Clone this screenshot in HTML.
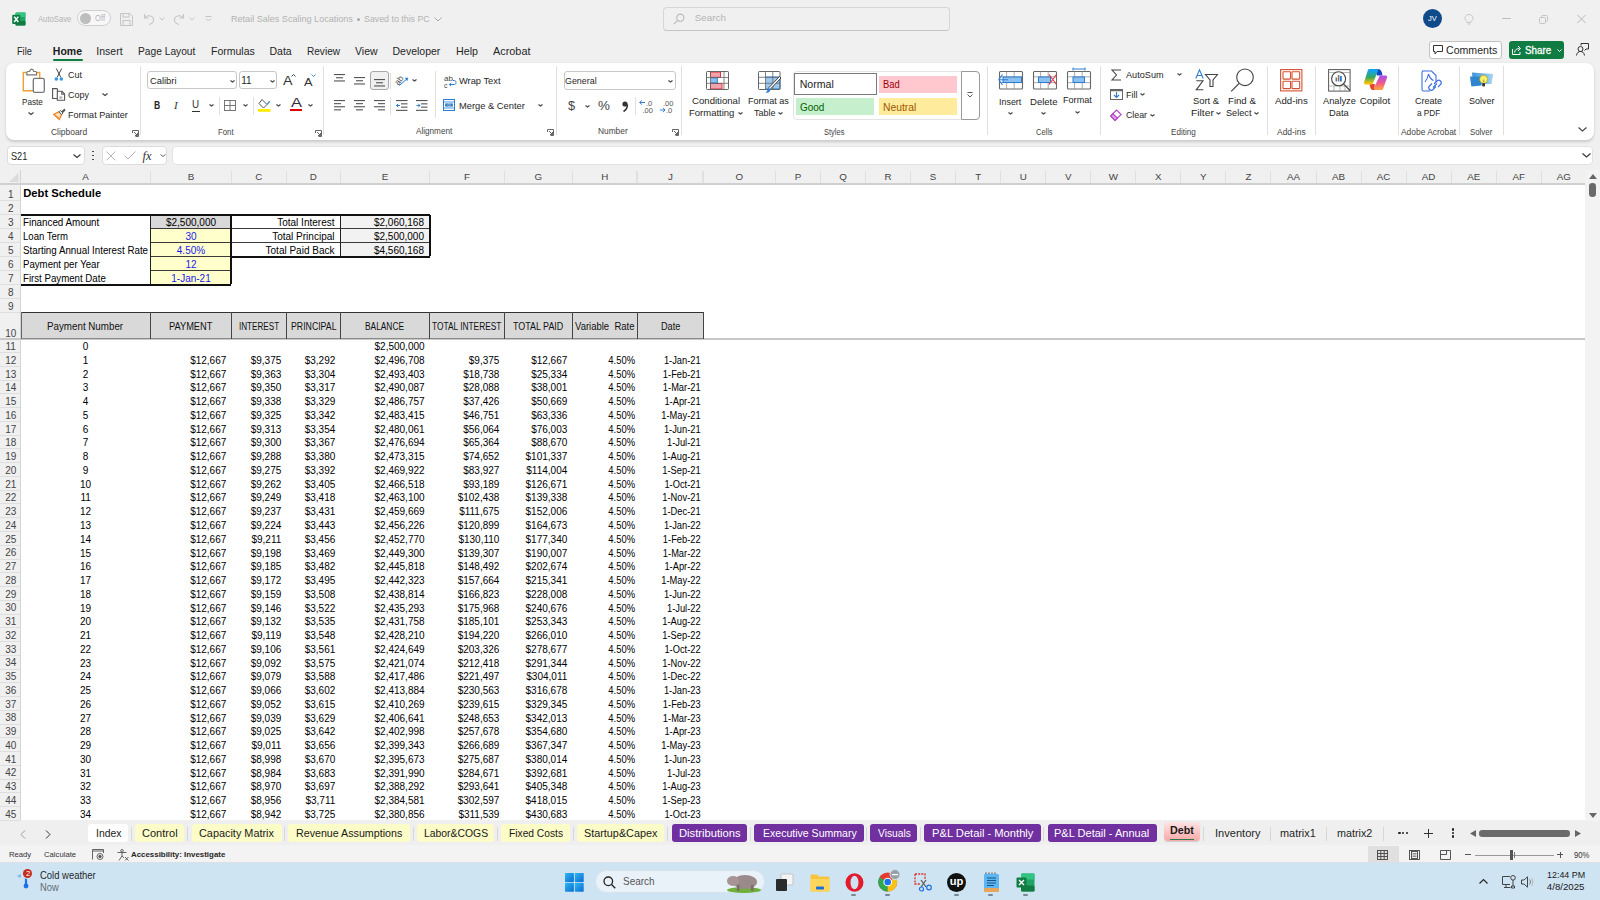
<!DOCTYPE html><html><head><meta charset="utf-8"><style>
*{box-sizing:border-box;margin:0;padding:0}
html,body{width:1600px;height:900px;overflow:hidden;background:#f0f0f0;font-family:"Liberation Sans",sans-serif;color:#222}
.a{position:absolute;white-space:nowrap}
.t{position:absolute;white-space:nowrap;line-height:1}

svg{position:absolute;overflow:visible}
</style></head><body>
<div class="a" style="left:0;top:169.5px;width:1585px;height:650.8px;background:#f0f0f0"></div>
<div class="a" style="left:21px;top:185.0px;width:1564px;height:635.3px;background:#fff"></div>
<div class="a" style="left:150.20px;top:170.5px;width:1px;height:13px;background:#e0e0e0"></div>
<div class="t" style="left:20.50px;width:130.20px;top:172.2px;text-align:center;font-size:9.8px;color:#444">A</div>
<div class="a" style="left:230.80px;top:170.5px;width:1px;height:13px;background:#e0e0e0"></div>
<div class="t" style="left:150.70px;width:80.60px;top:172.2px;text-align:center;font-size:9.8px;color:#444">B</div>
<div class="a" style="left:285.80px;top:170.5px;width:1px;height:13px;background:#e0e0e0"></div>
<div class="t" style="left:231.30px;width:55.00px;top:172.2px;text-align:center;font-size:9.8px;color:#444">C</div>
<div class="a" style="left:339.80px;top:170.5px;width:1px;height:13px;background:#e0e0e0"></div>
<div class="t" style="left:286.30px;width:54.00px;top:172.2px;text-align:center;font-size:9.8px;color:#444">D</div>
<div class="a" style="left:429.10px;top:170.5px;width:1px;height:13px;background:#e0e0e0"></div>
<div class="t" style="left:340.30px;width:89.30px;top:172.2px;text-align:center;font-size:9.8px;color:#444">E</div>
<div class="a" style="left:503.90px;top:170.5px;width:1px;height:13px;background:#e0e0e0"></div>
<div class="t" style="left:429.60px;width:74.80px;top:172.2px;text-align:center;font-size:9.8px;color:#444">F</div>
<div class="a" style="left:571.80px;top:170.5px;width:1px;height:13px;background:#e0e0e0"></div>
<div class="t" style="left:504.40px;width:67.90px;top:172.2px;text-align:center;font-size:9.8px;color:#444">G</div>
<div class="a" style="left:636.80px;top:170.5px;width:1px;height:13px;background:#e0e0e0"></div>
<div class="t" style="left:572.30px;width:65.00px;top:172.2px;text-align:center;font-size:9.8px;color:#444">H</div>
<div class="a" style="left:702.90px;top:170.5px;width:1px;height:13px;background:#e0e0e0"></div>
<div class="t" style="left:637.30px;width:66.10px;top:172.2px;text-align:center;font-size:9.8px;color:#444">J</div>
<div class="a" style="left:774.90px;top:170.5px;width:1px;height:13px;background:#e0e0e0"></div>
<div class="t" style="left:703.40px;width:72.00px;top:172.2px;text-align:center;font-size:9.8px;color:#444">O</div>
<div class="a" style="left:819.95px;top:170.5px;width:1px;height:13px;background:#e0e0e0"></div>
<div class="t" style="left:775.40px;width:45.05px;top:172.2px;text-align:center;font-size:9.8px;color:#444">P</div>
<div class="a" style="left:865.00px;top:170.5px;width:1px;height:13px;background:#e0e0e0"></div>
<div class="t" style="left:820.45px;width:45.05px;top:172.2px;text-align:center;font-size:9.8px;color:#444">Q</div>
<div class="a" style="left:910.05px;top:170.5px;width:1px;height:13px;background:#e0e0e0"></div>
<div class="t" style="left:865.50px;width:45.05px;top:172.2px;text-align:center;font-size:9.8px;color:#444">R</div>
<div class="a" style="left:955.10px;top:170.5px;width:1px;height:13px;background:#e0e0e0"></div>
<div class="t" style="left:910.55px;width:45.05px;top:172.2px;text-align:center;font-size:9.8px;color:#444">S</div>
<div class="a" style="left:1000.15px;top:170.5px;width:1px;height:13px;background:#e0e0e0"></div>
<div class="t" style="left:955.60px;width:45.05px;top:172.2px;text-align:center;font-size:9.8px;color:#444">T</div>
<div class="a" style="left:1045.20px;top:170.5px;width:1px;height:13px;background:#e0e0e0"></div>
<div class="t" style="left:1000.65px;width:45.05px;top:172.2px;text-align:center;font-size:9.8px;color:#444">U</div>
<div class="a" style="left:1090.25px;top:170.5px;width:1px;height:13px;background:#e0e0e0"></div>
<div class="t" style="left:1045.70px;width:45.05px;top:172.2px;text-align:center;font-size:9.8px;color:#444">V</div>
<div class="a" style="left:1135.30px;top:170.5px;width:1px;height:13px;background:#e0e0e0"></div>
<div class="t" style="left:1090.75px;width:45.05px;top:172.2px;text-align:center;font-size:9.8px;color:#444">W</div>
<div class="a" style="left:1180.35px;top:170.5px;width:1px;height:13px;background:#e0e0e0"></div>
<div class="t" style="left:1135.80px;width:45.05px;top:172.2px;text-align:center;font-size:9.8px;color:#444">X</div>
<div class="a" style="left:1225.40px;top:170.5px;width:1px;height:13px;background:#e0e0e0"></div>
<div class="t" style="left:1180.85px;width:45.05px;top:172.2px;text-align:center;font-size:9.8px;color:#444">Y</div>
<div class="a" style="left:1270.45px;top:170.5px;width:1px;height:13px;background:#e0e0e0"></div>
<div class="t" style="left:1225.90px;width:45.05px;top:172.2px;text-align:center;font-size:9.8px;color:#444">Z</div>
<div class="a" style="left:1315.50px;top:170.5px;width:1px;height:13px;background:#e0e0e0"></div>
<div class="t" style="left:1270.95px;width:45.05px;top:172.2px;text-align:center;font-size:9.8px;color:#444">AA</div>
<div class="a" style="left:1360.55px;top:170.5px;width:1px;height:13px;background:#e0e0e0"></div>
<div class="t" style="left:1316.00px;width:45.05px;top:172.2px;text-align:center;font-size:9.8px;color:#444">AB</div>
<div class="a" style="left:1405.60px;top:170.5px;width:1px;height:13px;background:#e0e0e0"></div>
<div class="t" style="left:1361.05px;width:45.05px;top:172.2px;text-align:center;font-size:9.8px;color:#444">AC</div>
<div class="a" style="left:1450.65px;top:170.5px;width:1px;height:13px;background:#e0e0e0"></div>
<div class="t" style="left:1406.10px;width:45.05px;top:172.2px;text-align:center;font-size:9.8px;color:#444">AD</div>
<div class="a" style="left:1495.70px;top:170.5px;width:1px;height:13px;background:#e0e0e0"></div>
<div class="t" style="left:1451.15px;width:45.05px;top:172.2px;text-align:center;font-size:9.8px;color:#444">AE</div>
<div class="a" style="left:1540.75px;top:170.5px;width:1px;height:13px;background:#e0e0e0"></div>
<div class="t" style="left:1496.20px;width:45.05px;top:172.2px;text-align:center;font-size:9.8px;color:#444">AF</div>
<div class="a" style="left:1585.80px;top:170.5px;width:1px;height:13px;background:#e0e0e0"></div>
<div class="t" style="left:1541.25px;width:45.05px;top:172.2px;text-align:center;font-size:9.8px;color:#444">AG</div>
<div class="a" style="left:635.80px;top:170.5px;width:1px;height:13px;background:#e0e0e0"></div>
<div class="a" style="left:702.00px;top:170.5px;width:1px;height:13px;background:#e0e0e0"></div>
<div class="a" style="left:0;top:183.3px;width:1585px;height:1.6px;background:#d0d0d0"></div>
<div class="a" style="left:19.8px;top:170px;width:1.2px;height:650.3px;background:#d4d4d4"></div>
<svg style="left:0;top:0" width="1" height="1"><polygon points="9,182 18.5,182 18.5,172.5" fill="#dcdcdc"/></svg>
<div class="a" style="left:0;top:200.10px;width:20px;height:1px;background:#dedede"></div>
<div class="t" style="left:1px;width:19.5px;top:190.00px;text-align:center;font-size:10px;color:#444">1</div>
<div class="a" style="left:0;top:214.20px;width:20px;height:1px;background:#dedede"></div>
<div class="t" style="left:1px;width:19.5px;top:204.10px;text-align:center;font-size:10px;color:#444">2</div>
<div class="a" style="left:0;top:228.20px;width:20px;height:1px;background:#dedede"></div>
<div class="t" style="left:1px;width:19.5px;top:218.10px;text-align:center;font-size:10px;color:#444">3</div>
<div class="a" style="left:0;top:242.10px;width:20px;height:1px;background:#dedede"></div>
<div class="t" style="left:1px;width:19.5px;top:232.00px;text-align:center;font-size:10px;color:#444">4</div>
<div class="a" style="left:0;top:256.00px;width:20px;height:1px;background:#dedede"></div>
<div class="t" style="left:1px;width:19.5px;top:245.90px;text-align:center;font-size:10px;color:#444">5</div>
<div class="a" style="left:0;top:270.00px;width:20px;height:1px;background:#dedede"></div>
<div class="t" style="left:1px;width:19.5px;top:259.90px;text-align:center;font-size:10px;color:#444">6</div>
<div class="a" style="left:0;top:284.00px;width:20px;height:1px;background:#dedede"></div>
<div class="t" style="left:1px;width:19.5px;top:273.90px;text-align:center;font-size:10px;color:#444">7</div>
<div class="a" style="left:0;top:297.90px;width:20px;height:1px;background:#dedede"></div>
<div class="t" style="left:1px;width:19.5px;top:287.80px;text-align:center;font-size:10px;color:#444">8</div>
<div class="a" style="left:0;top:311.90px;width:20px;height:1px;background:#dedede"></div>
<div class="t" style="left:1px;width:19.5px;top:301.80px;text-align:center;font-size:10px;color:#444">9</div>
<div class="a" style="left:0;top:338.45px;width:20px;height:1px;background:#dedede"></div>
<div class="t" style="left:1px;width:19.5px;top:329.15px;text-align:center;font-size:10px;color:#444">10</div>
<div class="a" style="left:0;top:352.20px;width:20px;height:1px;background:#dedede"></div>
<div class="t" style="left:1px;width:19.5px;top:342.10px;text-align:center;font-size:10px;color:#444">11</div>
<div class="a" style="left:0;top:365.96px;width:20px;height:1px;background:#dedede"></div>
<div class="t" style="left:1px;width:19.5px;top:355.86px;text-align:center;font-size:10px;color:#444">12</div>
<div class="a" style="left:0;top:379.71px;width:20px;height:1px;background:#dedede"></div>
<div class="t" style="left:1px;width:19.5px;top:369.61px;text-align:center;font-size:10px;color:#444">13</div>
<div class="a" style="left:0;top:393.46px;width:20px;height:1px;background:#dedede"></div>
<div class="t" style="left:1px;width:19.5px;top:383.36px;text-align:center;font-size:10px;color:#444">14</div>
<div class="a" style="left:0;top:407.21px;width:20px;height:1px;background:#dedede"></div>
<div class="t" style="left:1px;width:19.5px;top:397.11px;text-align:center;font-size:10px;color:#444">15</div>
<div class="a" style="left:0;top:420.97px;width:20px;height:1px;background:#dedede"></div>
<div class="t" style="left:1px;width:19.5px;top:410.87px;text-align:center;font-size:10px;color:#444">16</div>
<div class="a" style="left:0;top:434.72px;width:20px;height:1px;background:#dedede"></div>
<div class="t" style="left:1px;width:19.5px;top:424.62px;text-align:center;font-size:10px;color:#444">17</div>
<div class="a" style="left:0;top:448.47px;width:20px;height:1px;background:#dedede"></div>
<div class="t" style="left:1px;width:19.5px;top:438.37px;text-align:center;font-size:10px;color:#444">18</div>
<div class="a" style="left:0;top:462.23px;width:20px;height:1px;background:#dedede"></div>
<div class="t" style="left:1px;width:19.5px;top:452.13px;text-align:center;font-size:10px;color:#444">19</div>
<div class="a" style="left:0;top:475.98px;width:20px;height:1px;background:#dedede"></div>
<div class="t" style="left:1px;width:19.5px;top:465.88px;text-align:center;font-size:10px;color:#444">20</div>
<div class="a" style="left:0;top:489.73px;width:20px;height:1px;background:#dedede"></div>
<div class="t" style="left:1px;width:19.5px;top:479.63px;text-align:center;font-size:10px;color:#444">21</div>
<div class="a" style="left:0;top:503.49px;width:20px;height:1px;background:#dedede"></div>
<div class="t" style="left:1px;width:19.5px;top:493.39px;text-align:center;font-size:10px;color:#444">22</div>
<div class="a" style="left:0;top:517.24px;width:20px;height:1px;background:#dedede"></div>
<div class="t" style="left:1px;width:19.5px;top:507.14px;text-align:center;font-size:10px;color:#444">23</div>
<div class="a" style="left:0;top:530.99px;width:20px;height:1px;background:#dedede"></div>
<div class="t" style="left:1px;width:19.5px;top:520.89px;text-align:center;font-size:10px;color:#444">24</div>
<div class="a" style="left:0;top:544.74px;width:20px;height:1px;background:#dedede"></div>
<div class="t" style="left:1px;width:19.5px;top:534.64px;text-align:center;font-size:10px;color:#444">25</div>
<div class="a" style="left:0;top:558.50px;width:20px;height:1px;background:#dedede"></div>
<div class="t" style="left:1px;width:19.5px;top:548.40px;text-align:center;font-size:10px;color:#444">26</div>
<div class="a" style="left:0;top:572.25px;width:20px;height:1px;background:#dedede"></div>
<div class="t" style="left:1px;width:19.5px;top:562.15px;text-align:center;font-size:10px;color:#444">27</div>
<div class="a" style="left:0;top:586.00px;width:20px;height:1px;background:#dedede"></div>
<div class="t" style="left:1px;width:19.5px;top:575.90px;text-align:center;font-size:10px;color:#444">28</div>
<div class="a" style="left:0;top:599.76px;width:20px;height:1px;background:#dedede"></div>
<div class="t" style="left:1px;width:19.5px;top:589.66px;text-align:center;font-size:10px;color:#444">29</div>
<div class="a" style="left:0;top:613.51px;width:20px;height:1px;background:#dedede"></div>
<div class="t" style="left:1px;width:19.5px;top:603.41px;text-align:center;font-size:10px;color:#444">30</div>
<div class="a" style="left:0;top:627.26px;width:20px;height:1px;background:#dedede"></div>
<div class="t" style="left:1px;width:19.5px;top:617.16px;text-align:center;font-size:10px;color:#444">31</div>
<div class="a" style="left:0;top:641.02px;width:20px;height:1px;background:#dedede"></div>
<div class="t" style="left:1px;width:19.5px;top:630.92px;text-align:center;font-size:10px;color:#444">32</div>
<div class="a" style="left:0;top:654.77px;width:20px;height:1px;background:#dedede"></div>
<div class="t" style="left:1px;width:19.5px;top:644.67px;text-align:center;font-size:10px;color:#444">33</div>
<div class="a" style="left:0;top:668.52px;width:20px;height:1px;background:#dedede"></div>
<div class="t" style="left:1px;width:19.5px;top:658.42px;text-align:center;font-size:10px;color:#444">34</div>
<div class="a" style="left:0;top:682.28px;width:20px;height:1px;background:#dedede"></div>
<div class="t" style="left:1px;width:19.5px;top:672.18px;text-align:center;font-size:10px;color:#444">35</div>
<div class="a" style="left:0;top:696.03px;width:20px;height:1px;background:#dedede"></div>
<div class="t" style="left:1px;width:19.5px;top:685.93px;text-align:center;font-size:10px;color:#444">36</div>
<div class="a" style="left:0;top:709.78px;width:20px;height:1px;background:#dedede"></div>
<div class="t" style="left:1px;width:19.5px;top:699.68px;text-align:center;font-size:10px;color:#444">37</div>
<div class="a" style="left:0;top:723.53px;width:20px;height:1px;background:#dedede"></div>
<div class="t" style="left:1px;width:19.5px;top:713.43px;text-align:center;font-size:10px;color:#444">38</div>
<div class="a" style="left:0;top:737.29px;width:20px;height:1px;background:#dedede"></div>
<div class="t" style="left:1px;width:19.5px;top:727.19px;text-align:center;font-size:10px;color:#444">39</div>
<div class="a" style="left:0;top:751.04px;width:20px;height:1px;background:#dedede"></div>
<div class="t" style="left:1px;width:19.5px;top:740.94px;text-align:center;font-size:10px;color:#444">40</div>
<div class="a" style="left:0;top:764.79px;width:20px;height:1px;background:#dedede"></div>
<div class="t" style="left:1px;width:19.5px;top:754.69px;text-align:center;font-size:10px;color:#444">41</div>
<div class="a" style="left:0;top:778.55px;width:20px;height:1px;background:#dedede"></div>
<div class="t" style="left:1px;width:19.5px;top:768.45px;text-align:center;font-size:10px;color:#444">42</div>
<div class="a" style="left:0;top:792.30px;width:20px;height:1px;background:#dedede"></div>
<div class="t" style="left:1px;width:19.5px;top:782.20px;text-align:center;font-size:10px;color:#444">43</div>
<div class="a" style="left:0;top:806.05px;width:20px;height:1px;background:#dedede"></div>
<div class="t" style="left:1px;width:19.5px;top:795.95px;text-align:center;font-size:10px;color:#444">44</div>
<div class="a" style="left:0;top:819.81px;width:20px;height:1px;background:#dedede"></div>
<div class="t" style="left:1px;width:19.5px;top:809.71px;text-align:center;font-size:10px;color:#444">45</div>
<div class="a" style="left:0;top:338.2px;width:1585px;height:1.4px;background:#c8c8c8"></div>
<div class="a" style="left:150.70px;top:214.70px;width:80.60px;height:14.00px;background:#d9d9d9"></div>
<div class="a" style="left:150.70px;top:228.70px;width:80.60px;height:55.80px;background:#ffffcc"></div>
<div class="a" style="left:340.30px;top:214.70px;width:89.30px;height:41.80px;background:#f2f2f2"></div>
<div class="a" style="left:150.70px;top:228.15px;width:80.60px;height:1.1px;background:#3a3a3a"></div>
<div class="a" style="left:150.70px;top:242.05px;width:80.60px;height:1.1px;background:#3a3a3a"></div>
<div class="a" style="left:150.70px;top:255.95px;width:80.60px;height:1.1px;background:#3a3a3a"></div>
<div class="a" style="left:150.70px;top:269.95px;width:80.60px;height:1.1px;background:#3a3a3a"></div>
<div class="a" style="left:231.30px;top:228.15px;width:198.30px;height:1.1px;background:#3a3a3a"></div>
<div class="a" style="left:231.30px;top:242.05px;width:198.30px;height:1.1px;background:#3a3a3a"></div>
<div class="a" style="left:20.50px;top:213.70px;width:210.80px;height:2px;background:#111"></div>
<div class="a" style="left:20.50px;top:283.50px;width:210.80px;height:2px;background:#111"></div>
<div class="a" style="left:230.30px;top:214.70px;width:2px;height:69.80px;background:#111"></div>
<div class="a" style="left:150.05px;top:214.70px;width:1.3px;height:69.80px;background:#222"></div>
<div class="a" style="left:231.30px;top:213.70px;width:198.30px;height:2px;background:#111"></div>
<div class="a" style="left:231.30px;top:255.50px;width:198.30px;height:2px;background:#111"></div>
<div class="a" style="left:230.30px;top:214.70px;width:2px;height:41.80px;background:#111"></div>
<div class="a" style="left:428.60px;top:214.70px;width:2px;height:41.80px;background:#111"></div>
<div class="a" style="left:339.65px;top:214.70px;width:1.3px;height:41.80px;background:#222"></div>
<div class="t" style="top:218.20px;font-size:10px;color:#000;left:150.70px;width:80.60px;text-align:center;">$2,500,000</div>
<div class="t" style="top:232.10px;font-size:10px;color:#1a1aee;left:150.70px;width:80.60px;text-align:center;">30</div>
<div class="t" style="top:246.00px;font-size:10px;color:#1a1aee;left:150.70px;width:80.60px;text-align:center;">4.50%</div>
<div class="t" style="top:260.00px;font-size:10px;color:#1a1aee;left:150.70px;width:80.60px;text-align:center;">12</div>
<div class="t" style="top:274.00px;font-size:10px;color:#1a1aee;left:150.70px;width:80.60px;text-align:center;">1-Jan-21</div>
<div class="t" style="top:218.20px;font-size:10px;color:#000;left:286.30px;width:48.20px;text-align:right;left:231.30px;width:103.20px;">Total Interest</div>
<div class="t" style="top:218.20px;font-size:10px;color:#000;left:340.30px;width:83.70px;text-align:right;">$2,060,168</div>
<div class="t" style="top:232.10px;font-size:10px;color:#000;left:286.30px;width:48.20px;text-align:right;left:231.30px;width:103.20px;">Total Principal</div>
<div class="t" style="top:232.10px;font-size:10px;color:#000;left:340.30px;width:83.70px;text-align:right;">$2,500,000</div>
<div class="t" style="top:246.00px;font-size:10px;color:#000;left:286.30px;width:48.20px;text-align:right;left:231.30px;width:103.20px;">Total Paid Back</div>
<div class="t" style="top:246.00px;font-size:10px;color:#000;left:340.30px;width:83.70px;text-align:right;">$4,560,168</div>
<div class="a" style="left:20.50px;top:312.40px;width:682.90px;height:26.55px;background:#d9d9d9"></div>
<div class="a" style="left:20.50px;top:311.60px;width:682.90px;height:1.6px;background:#333"></div>
<div class="a" style="left:20.50px;top:337.75px;width:682.90px;height:1.2px;background:#8a8a8a"></div>
<div class="a" style="left:150.00px;top:312.40px;width:1.4px;height:26.55px;background:#444"></div>
<div class="a" style="left:230.60px;top:312.40px;width:1.4px;height:26.55px;background:#444"></div>
<div class="a" style="left:285.60px;top:312.40px;width:1.4px;height:26.55px;background:#444"></div>
<div class="a" style="left:339.60px;top:312.40px;width:1.4px;height:26.55px;background:#444"></div>
<div class="a" style="left:428.90px;top:312.40px;width:1.4px;height:26.55px;background:#444"></div>
<div class="a" style="left:503.70px;top:312.40px;width:1.4px;height:26.55px;background:#444"></div>
<div class="a" style="left:571.60px;top:312.40px;width:1.4px;height:26.55px;background:#444"></div>
<div class="a" style="left:636.60px;top:312.40px;width:1.4px;height:26.55px;background:#444"></div>
<div class="a" style="left:702.70px;top:312.40px;width:1.4px;height:26.55px;background:#444"></div>
<div class="a" style="left:20.60px;top:312.40px;width:1px;height:26.55px;background:#666"></div>
<div class="t" style="left:47.20px;top:322.01px;font-size:10px;color:#111;transform-origin:0 0;transform:scaleX(0.978)">Payment Number</div>
<div class="t" style="left:169.40px;top:322.01px;font-size:10px;color:#111;transform-origin:0 0;transform:scaleX(0.926)">PAYMENT</div>
<div class="t" style="left:238.70px;top:322.01px;font-size:10px;color:#111;transform-origin:0 0;transform:scaleX(0.811)">INTEREST</div>
<div class="t" style="left:290.50px;top:322.01px;font-size:10px;color:#111;transform-origin:0 0;transform:scaleX(0.874)">PRINCIPAL</div>
<div class="t" style="left:365.00px;top:322.01px;font-size:10px;color:#111;transform-origin:0 0;transform:scaleX(0.835)">BALANCE</div>
<div class="t" style="left:432.20px;top:322.01px;font-size:10px;color:#111;transform-origin:0 0;transform:scaleX(0.835)">TOTAL INTEREST</div>
<div class="t" style="left:513.20px;top:322.01px;font-size:10px;color:#111;transform-origin:0 0;transform:scaleX(0.893)">TOTAL PAID</div>
<div class="t" style="left:575.30px;top:322.01px;font-size:10px;color:#111;transform-origin:0 0;transform:scaleX(0.950)">Variable&nbsp; Rate</div>
<div class="t" style="left:660.50px;top:322.01px;font-size:10px;color:#111;transform-origin:0 0;transform:scaleX(0.914)">Date</div>
<div class="t" style="top:342.20px;font-size:10px;color:#000;left:20.50px;width:130.20px;text-align:center;">0</div>
<div class="t" style="top:342.20px;font-size:10px;color:#000;left:340.30px;width:84.30px;text-align:right;">$2,500,000</div>
<div class="t" style="top:355.96px;font-size:10px;color:#000;left:20.50px;width:130.20px;text-align:center;">1</div>
<div class="t" style="top:355.96px;font-size:10px;color:#000;left:150.70px;width:75.60px;text-align:right;">$12,667</div>
<div class="t" style="top:355.96px;font-size:10px;color:#000;left:231.30px;width:50.00px;text-align:right;">$9,375</div>
<div class="t" style="top:355.96px;font-size:10px;color:#000;left:286.30px;width:49.00px;text-align:right;">$3,292</div>
<div class="t" style="top:355.96px;font-size:10px;color:#000;left:340.30px;width:84.30px;text-align:right;">$2,496,708</div>
<div class="t" style="top:355.96px;font-size:10px;color:#000;left:429.60px;width:69.80px;text-align:right;">$9,375</div>
<div class="t" style="top:355.96px;font-size:10px;color:#000;left:504.40px;width:62.90px;text-align:right;">$12,667</div>
<div class="t" style="top:355.96px;font-size:10px;color:#000;left:572.30px;width:63.00px;text-align:right;transform-origin:100% 0;transform:scaleX(0.94);">4.50%</div>
<div class="t" style="top:355.96px;font-size:10px;color:#000;left:637.30px;width:63.60px;text-align:right;transform-origin:100% 0;transform:scaleX(0.93);">1-Jan-21</div>
<div class="t" style="top:369.71px;font-size:10px;color:#000;left:20.50px;width:130.20px;text-align:center;">2</div>
<div class="t" style="top:369.71px;font-size:10px;color:#000;left:150.70px;width:75.60px;text-align:right;">$12,667</div>
<div class="t" style="top:369.71px;font-size:10px;color:#000;left:231.30px;width:50.00px;text-align:right;">$9,363</div>
<div class="t" style="top:369.71px;font-size:10px;color:#000;left:286.30px;width:49.00px;text-align:right;">$3,304</div>
<div class="t" style="top:369.71px;font-size:10px;color:#000;left:340.30px;width:84.30px;text-align:right;">$2,493,403</div>
<div class="t" style="top:369.71px;font-size:10px;color:#000;left:429.60px;width:69.80px;text-align:right;">$18,738</div>
<div class="t" style="top:369.71px;font-size:10px;color:#000;left:504.40px;width:62.90px;text-align:right;">$25,334</div>
<div class="t" style="top:369.71px;font-size:10px;color:#000;left:572.30px;width:63.00px;text-align:right;transform-origin:100% 0;transform:scaleX(0.94);">4.50%</div>
<div class="t" style="top:369.71px;font-size:10px;color:#000;left:637.30px;width:63.60px;text-align:right;transform-origin:100% 0;transform:scaleX(0.93);">1-Feb-21</div>
<div class="t" style="top:383.46px;font-size:10px;color:#000;left:20.50px;width:130.20px;text-align:center;">3</div>
<div class="t" style="top:383.46px;font-size:10px;color:#000;left:150.70px;width:75.60px;text-align:right;">$12,667</div>
<div class="t" style="top:383.46px;font-size:10px;color:#000;left:231.30px;width:50.00px;text-align:right;">$9,350</div>
<div class="t" style="top:383.46px;font-size:10px;color:#000;left:286.30px;width:49.00px;text-align:right;">$3,317</div>
<div class="t" style="top:383.46px;font-size:10px;color:#000;left:340.30px;width:84.30px;text-align:right;">$2,490,087</div>
<div class="t" style="top:383.46px;font-size:10px;color:#000;left:429.60px;width:69.80px;text-align:right;">$28,088</div>
<div class="t" style="top:383.46px;font-size:10px;color:#000;left:504.40px;width:62.90px;text-align:right;">$38,001</div>
<div class="t" style="top:383.46px;font-size:10px;color:#000;left:572.30px;width:63.00px;text-align:right;transform-origin:100% 0;transform:scaleX(0.94);">4.50%</div>
<div class="t" style="top:383.46px;font-size:10px;color:#000;left:637.30px;width:63.60px;text-align:right;transform-origin:100% 0;transform:scaleX(0.93);">1-Mar-21</div>
<div class="t" style="top:397.21px;font-size:10px;color:#000;left:20.50px;width:130.20px;text-align:center;">4</div>
<div class="t" style="top:397.21px;font-size:10px;color:#000;left:150.70px;width:75.60px;text-align:right;">$12,667</div>
<div class="t" style="top:397.21px;font-size:10px;color:#000;left:231.30px;width:50.00px;text-align:right;">$9,338</div>
<div class="t" style="top:397.21px;font-size:10px;color:#000;left:286.30px;width:49.00px;text-align:right;">$3,329</div>
<div class="t" style="top:397.21px;font-size:10px;color:#000;left:340.30px;width:84.30px;text-align:right;">$2,486,757</div>
<div class="t" style="top:397.21px;font-size:10px;color:#000;left:429.60px;width:69.80px;text-align:right;">$37,426</div>
<div class="t" style="top:397.21px;font-size:10px;color:#000;left:504.40px;width:62.90px;text-align:right;">$50,669</div>
<div class="t" style="top:397.21px;font-size:10px;color:#000;left:572.30px;width:63.00px;text-align:right;transform-origin:100% 0;transform:scaleX(0.94);">4.50%</div>
<div class="t" style="top:397.21px;font-size:10px;color:#000;left:637.30px;width:63.60px;text-align:right;transform-origin:100% 0;transform:scaleX(0.93);">1-Apr-21</div>
<div class="t" style="top:410.97px;font-size:10px;color:#000;left:20.50px;width:130.20px;text-align:center;">5</div>
<div class="t" style="top:410.97px;font-size:10px;color:#000;left:150.70px;width:75.60px;text-align:right;">$12,667</div>
<div class="t" style="top:410.97px;font-size:10px;color:#000;left:231.30px;width:50.00px;text-align:right;">$9,325</div>
<div class="t" style="top:410.97px;font-size:10px;color:#000;left:286.30px;width:49.00px;text-align:right;">$3,342</div>
<div class="t" style="top:410.97px;font-size:10px;color:#000;left:340.30px;width:84.30px;text-align:right;">$2,483,415</div>
<div class="t" style="top:410.97px;font-size:10px;color:#000;left:429.60px;width:69.80px;text-align:right;">$46,751</div>
<div class="t" style="top:410.97px;font-size:10px;color:#000;left:504.40px;width:62.90px;text-align:right;">$63,336</div>
<div class="t" style="top:410.97px;font-size:10px;color:#000;left:572.30px;width:63.00px;text-align:right;transform-origin:100% 0;transform:scaleX(0.94);">4.50%</div>
<div class="t" style="top:410.97px;font-size:10px;color:#000;left:637.30px;width:63.60px;text-align:right;transform-origin:100% 0;transform:scaleX(0.93);">1-May-21</div>
<div class="t" style="top:424.72px;font-size:10px;color:#000;left:20.50px;width:130.20px;text-align:center;">6</div>
<div class="t" style="top:424.72px;font-size:10px;color:#000;left:150.70px;width:75.60px;text-align:right;">$12,667</div>
<div class="t" style="top:424.72px;font-size:10px;color:#000;left:231.30px;width:50.00px;text-align:right;">$9,313</div>
<div class="t" style="top:424.72px;font-size:10px;color:#000;left:286.30px;width:49.00px;text-align:right;">$3,354</div>
<div class="t" style="top:424.72px;font-size:10px;color:#000;left:340.30px;width:84.30px;text-align:right;">$2,480,061</div>
<div class="t" style="top:424.72px;font-size:10px;color:#000;left:429.60px;width:69.80px;text-align:right;">$56,064</div>
<div class="t" style="top:424.72px;font-size:10px;color:#000;left:504.40px;width:62.90px;text-align:right;">$76,003</div>
<div class="t" style="top:424.72px;font-size:10px;color:#000;left:572.30px;width:63.00px;text-align:right;transform-origin:100% 0;transform:scaleX(0.94);">4.50%</div>
<div class="t" style="top:424.72px;font-size:10px;color:#000;left:637.30px;width:63.60px;text-align:right;transform-origin:100% 0;transform:scaleX(0.93);">1-Jun-21</div>
<div class="t" style="top:438.47px;font-size:10px;color:#000;left:20.50px;width:130.20px;text-align:center;">7</div>
<div class="t" style="top:438.47px;font-size:10px;color:#000;left:150.70px;width:75.60px;text-align:right;">$12,667</div>
<div class="t" style="top:438.47px;font-size:10px;color:#000;left:231.30px;width:50.00px;text-align:right;">$9,300</div>
<div class="t" style="top:438.47px;font-size:10px;color:#000;left:286.30px;width:49.00px;text-align:right;">$3,367</div>
<div class="t" style="top:438.47px;font-size:10px;color:#000;left:340.30px;width:84.30px;text-align:right;">$2,476,694</div>
<div class="t" style="top:438.47px;font-size:10px;color:#000;left:429.60px;width:69.80px;text-align:right;">$65,364</div>
<div class="t" style="top:438.47px;font-size:10px;color:#000;left:504.40px;width:62.90px;text-align:right;">$88,670</div>
<div class="t" style="top:438.47px;font-size:10px;color:#000;left:572.30px;width:63.00px;text-align:right;transform-origin:100% 0;transform:scaleX(0.94);">4.50%</div>
<div class="t" style="top:438.47px;font-size:10px;color:#000;left:637.30px;width:63.60px;text-align:right;transform-origin:100% 0;transform:scaleX(0.93);">1-Jul-21</div>
<div class="t" style="top:452.23px;font-size:10px;color:#000;left:20.50px;width:130.20px;text-align:center;">8</div>
<div class="t" style="top:452.23px;font-size:10px;color:#000;left:150.70px;width:75.60px;text-align:right;">$12,667</div>
<div class="t" style="top:452.23px;font-size:10px;color:#000;left:231.30px;width:50.00px;text-align:right;">$9,288</div>
<div class="t" style="top:452.23px;font-size:10px;color:#000;left:286.30px;width:49.00px;text-align:right;">$3,380</div>
<div class="t" style="top:452.23px;font-size:10px;color:#000;left:340.30px;width:84.30px;text-align:right;">$2,473,315</div>
<div class="t" style="top:452.23px;font-size:10px;color:#000;left:429.60px;width:69.80px;text-align:right;">$74,652</div>
<div class="t" style="top:452.23px;font-size:10px;color:#000;left:504.40px;width:62.90px;text-align:right;">$101,337</div>
<div class="t" style="top:452.23px;font-size:10px;color:#000;left:572.30px;width:63.00px;text-align:right;transform-origin:100% 0;transform:scaleX(0.94);">4.50%</div>
<div class="t" style="top:452.23px;font-size:10px;color:#000;left:637.30px;width:63.60px;text-align:right;transform-origin:100% 0;transform:scaleX(0.93);">1-Aug-21</div>
<div class="t" style="top:465.98px;font-size:10px;color:#000;left:20.50px;width:130.20px;text-align:center;">9</div>
<div class="t" style="top:465.98px;font-size:10px;color:#000;left:150.70px;width:75.60px;text-align:right;">$12,667</div>
<div class="t" style="top:465.98px;font-size:10px;color:#000;left:231.30px;width:50.00px;text-align:right;">$9,275</div>
<div class="t" style="top:465.98px;font-size:10px;color:#000;left:286.30px;width:49.00px;text-align:right;">$3,392</div>
<div class="t" style="top:465.98px;font-size:10px;color:#000;left:340.30px;width:84.30px;text-align:right;">$2,469,922</div>
<div class="t" style="top:465.98px;font-size:10px;color:#000;left:429.60px;width:69.80px;text-align:right;">$83,927</div>
<div class="t" style="top:465.98px;font-size:10px;color:#000;left:504.40px;width:62.90px;text-align:right;">$114,004</div>
<div class="t" style="top:465.98px;font-size:10px;color:#000;left:572.30px;width:63.00px;text-align:right;transform-origin:100% 0;transform:scaleX(0.94);">4.50%</div>
<div class="t" style="top:465.98px;font-size:10px;color:#000;left:637.30px;width:63.60px;text-align:right;transform-origin:100% 0;transform:scaleX(0.93);">1-Sep-21</div>
<div class="t" style="top:479.73px;font-size:10px;color:#000;left:20.50px;width:130.20px;text-align:center;">10</div>
<div class="t" style="top:479.73px;font-size:10px;color:#000;left:150.70px;width:75.60px;text-align:right;">$12,667</div>
<div class="t" style="top:479.73px;font-size:10px;color:#000;left:231.30px;width:50.00px;text-align:right;">$9,262</div>
<div class="t" style="top:479.73px;font-size:10px;color:#000;left:286.30px;width:49.00px;text-align:right;">$3,405</div>
<div class="t" style="top:479.73px;font-size:10px;color:#000;left:340.30px;width:84.30px;text-align:right;">$2,466,518</div>
<div class="t" style="top:479.73px;font-size:10px;color:#000;left:429.60px;width:69.80px;text-align:right;">$93,189</div>
<div class="t" style="top:479.73px;font-size:10px;color:#000;left:504.40px;width:62.90px;text-align:right;">$126,671</div>
<div class="t" style="top:479.73px;font-size:10px;color:#000;left:572.30px;width:63.00px;text-align:right;transform-origin:100% 0;transform:scaleX(0.94);">4.50%</div>
<div class="t" style="top:479.73px;font-size:10px;color:#000;left:637.30px;width:63.60px;text-align:right;transform-origin:100% 0;transform:scaleX(0.93);">1-Oct-21</div>
<div class="t" style="top:493.49px;font-size:10px;color:#000;left:20.50px;width:130.20px;text-align:center;">11</div>
<div class="t" style="top:493.49px;font-size:10px;color:#000;left:150.70px;width:75.60px;text-align:right;">$12,667</div>
<div class="t" style="top:493.49px;font-size:10px;color:#000;left:231.30px;width:50.00px;text-align:right;">$9,249</div>
<div class="t" style="top:493.49px;font-size:10px;color:#000;left:286.30px;width:49.00px;text-align:right;">$3,418</div>
<div class="t" style="top:493.49px;font-size:10px;color:#000;left:340.30px;width:84.30px;text-align:right;">$2,463,100</div>
<div class="t" style="top:493.49px;font-size:10px;color:#000;left:429.60px;width:69.80px;text-align:right;">$102,438</div>
<div class="t" style="top:493.49px;font-size:10px;color:#000;left:504.40px;width:62.90px;text-align:right;">$139,338</div>
<div class="t" style="top:493.49px;font-size:10px;color:#000;left:572.30px;width:63.00px;text-align:right;transform-origin:100% 0;transform:scaleX(0.94);">4.50%</div>
<div class="t" style="top:493.49px;font-size:10px;color:#000;left:637.30px;width:63.60px;text-align:right;transform-origin:100% 0;transform:scaleX(0.93);">1-Nov-21</div>
<div class="t" style="top:507.24px;font-size:10px;color:#000;left:20.50px;width:130.20px;text-align:center;">12</div>
<div class="t" style="top:507.24px;font-size:10px;color:#000;left:150.70px;width:75.60px;text-align:right;">$12,667</div>
<div class="t" style="top:507.24px;font-size:10px;color:#000;left:231.30px;width:50.00px;text-align:right;">$9,237</div>
<div class="t" style="top:507.24px;font-size:10px;color:#000;left:286.30px;width:49.00px;text-align:right;">$3,431</div>
<div class="t" style="top:507.24px;font-size:10px;color:#000;left:340.30px;width:84.30px;text-align:right;">$2,459,669</div>
<div class="t" style="top:507.24px;font-size:10px;color:#000;left:429.60px;width:69.80px;text-align:right;">$111,675</div>
<div class="t" style="top:507.24px;font-size:10px;color:#000;left:504.40px;width:62.90px;text-align:right;">$152,006</div>
<div class="t" style="top:507.24px;font-size:10px;color:#000;left:572.30px;width:63.00px;text-align:right;transform-origin:100% 0;transform:scaleX(0.94);">4.50%</div>
<div class="t" style="top:507.24px;font-size:10px;color:#000;left:637.30px;width:63.60px;text-align:right;transform-origin:100% 0;transform:scaleX(0.93);">1-Dec-21</div>
<div class="t" style="top:520.99px;font-size:10px;color:#000;left:20.50px;width:130.20px;text-align:center;">13</div>
<div class="t" style="top:520.99px;font-size:10px;color:#000;left:150.70px;width:75.60px;text-align:right;">$12,667</div>
<div class="t" style="top:520.99px;font-size:10px;color:#000;left:231.30px;width:50.00px;text-align:right;">$9,224</div>
<div class="t" style="top:520.99px;font-size:10px;color:#000;left:286.30px;width:49.00px;text-align:right;">$3,443</div>
<div class="t" style="top:520.99px;font-size:10px;color:#000;left:340.30px;width:84.30px;text-align:right;">$2,456,226</div>
<div class="t" style="top:520.99px;font-size:10px;color:#000;left:429.60px;width:69.80px;text-align:right;">$120,899</div>
<div class="t" style="top:520.99px;font-size:10px;color:#000;left:504.40px;width:62.90px;text-align:right;">$164,673</div>
<div class="t" style="top:520.99px;font-size:10px;color:#000;left:572.30px;width:63.00px;text-align:right;transform-origin:100% 0;transform:scaleX(0.94);">4.50%</div>
<div class="t" style="top:520.99px;font-size:10px;color:#000;left:637.30px;width:63.60px;text-align:right;transform-origin:100% 0;transform:scaleX(0.93);">1-Jan-22</div>
<div class="t" style="top:534.74px;font-size:10px;color:#000;left:20.50px;width:130.20px;text-align:center;">14</div>
<div class="t" style="top:534.74px;font-size:10px;color:#000;left:150.70px;width:75.60px;text-align:right;">$12,667</div>
<div class="t" style="top:534.74px;font-size:10px;color:#000;left:231.30px;width:50.00px;text-align:right;">$9,211</div>
<div class="t" style="top:534.74px;font-size:10px;color:#000;left:286.30px;width:49.00px;text-align:right;">$3,456</div>
<div class="t" style="top:534.74px;font-size:10px;color:#000;left:340.30px;width:84.30px;text-align:right;">$2,452,770</div>
<div class="t" style="top:534.74px;font-size:10px;color:#000;left:429.60px;width:69.80px;text-align:right;">$130,110</div>
<div class="t" style="top:534.74px;font-size:10px;color:#000;left:504.40px;width:62.90px;text-align:right;">$177,340</div>
<div class="t" style="top:534.74px;font-size:10px;color:#000;left:572.30px;width:63.00px;text-align:right;transform-origin:100% 0;transform:scaleX(0.94);">4.50%</div>
<div class="t" style="top:534.74px;font-size:10px;color:#000;left:637.30px;width:63.60px;text-align:right;transform-origin:100% 0;transform:scaleX(0.93);">1-Feb-22</div>
<div class="t" style="top:548.50px;font-size:10px;color:#000;left:20.50px;width:130.20px;text-align:center;">15</div>
<div class="t" style="top:548.50px;font-size:10px;color:#000;left:150.70px;width:75.60px;text-align:right;">$12,667</div>
<div class="t" style="top:548.50px;font-size:10px;color:#000;left:231.30px;width:50.00px;text-align:right;">$9,198</div>
<div class="t" style="top:548.50px;font-size:10px;color:#000;left:286.30px;width:49.00px;text-align:right;">$3,469</div>
<div class="t" style="top:548.50px;font-size:10px;color:#000;left:340.30px;width:84.30px;text-align:right;">$2,449,300</div>
<div class="t" style="top:548.50px;font-size:10px;color:#000;left:429.60px;width:69.80px;text-align:right;">$139,307</div>
<div class="t" style="top:548.50px;font-size:10px;color:#000;left:504.40px;width:62.90px;text-align:right;">$190,007</div>
<div class="t" style="top:548.50px;font-size:10px;color:#000;left:572.30px;width:63.00px;text-align:right;transform-origin:100% 0;transform:scaleX(0.94);">4.50%</div>
<div class="t" style="top:548.50px;font-size:10px;color:#000;left:637.30px;width:63.60px;text-align:right;transform-origin:100% 0;transform:scaleX(0.93);">1-Mar-22</div>
<div class="t" style="top:562.25px;font-size:10px;color:#000;left:20.50px;width:130.20px;text-align:center;">16</div>
<div class="t" style="top:562.25px;font-size:10px;color:#000;left:150.70px;width:75.60px;text-align:right;">$12,667</div>
<div class="t" style="top:562.25px;font-size:10px;color:#000;left:231.30px;width:50.00px;text-align:right;">$9,185</div>
<div class="t" style="top:562.25px;font-size:10px;color:#000;left:286.30px;width:49.00px;text-align:right;">$3,482</div>
<div class="t" style="top:562.25px;font-size:10px;color:#000;left:340.30px;width:84.30px;text-align:right;">$2,445,818</div>
<div class="t" style="top:562.25px;font-size:10px;color:#000;left:429.60px;width:69.80px;text-align:right;">$148,492</div>
<div class="t" style="top:562.25px;font-size:10px;color:#000;left:504.40px;width:62.90px;text-align:right;">$202,674</div>
<div class="t" style="top:562.25px;font-size:10px;color:#000;left:572.30px;width:63.00px;text-align:right;transform-origin:100% 0;transform:scaleX(0.94);">4.50%</div>
<div class="t" style="top:562.25px;font-size:10px;color:#000;left:637.30px;width:63.60px;text-align:right;transform-origin:100% 0;transform:scaleX(0.93);">1-Apr-22</div>
<div class="t" style="top:576.00px;font-size:10px;color:#000;left:20.50px;width:130.20px;text-align:center;">17</div>
<div class="t" style="top:576.00px;font-size:10px;color:#000;left:150.70px;width:75.60px;text-align:right;">$12,667</div>
<div class="t" style="top:576.00px;font-size:10px;color:#000;left:231.30px;width:50.00px;text-align:right;">$9,172</div>
<div class="t" style="top:576.00px;font-size:10px;color:#000;left:286.30px;width:49.00px;text-align:right;">$3,495</div>
<div class="t" style="top:576.00px;font-size:10px;color:#000;left:340.30px;width:84.30px;text-align:right;">$2,442,323</div>
<div class="t" style="top:576.00px;font-size:10px;color:#000;left:429.60px;width:69.80px;text-align:right;">$157,664</div>
<div class="t" style="top:576.00px;font-size:10px;color:#000;left:504.40px;width:62.90px;text-align:right;">$215,341</div>
<div class="t" style="top:576.00px;font-size:10px;color:#000;left:572.30px;width:63.00px;text-align:right;transform-origin:100% 0;transform:scaleX(0.94);">4.50%</div>
<div class="t" style="top:576.00px;font-size:10px;color:#000;left:637.30px;width:63.60px;text-align:right;transform-origin:100% 0;transform:scaleX(0.93);">1-May-22</div>
<div class="t" style="top:589.76px;font-size:10px;color:#000;left:20.50px;width:130.20px;text-align:center;">18</div>
<div class="t" style="top:589.76px;font-size:10px;color:#000;left:150.70px;width:75.60px;text-align:right;">$12,667</div>
<div class="t" style="top:589.76px;font-size:10px;color:#000;left:231.30px;width:50.00px;text-align:right;">$9,159</div>
<div class="t" style="top:589.76px;font-size:10px;color:#000;left:286.30px;width:49.00px;text-align:right;">$3,508</div>
<div class="t" style="top:589.76px;font-size:10px;color:#000;left:340.30px;width:84.30px;text-align:right;">$2,438,814</div>
<div class="t" style="top:589.76px;font-size:10px;color:#000;left:429.60px;width:69.80px;text-align:right;">$166,823</div>
<div class="t" style="top:589.76px;font-size:10px;color:#000;left:504.40px;width:62.90px;text-align:right;">$228,008</div>
<div class="t" style="top:589.76px;font-size:10px;color:#000;left:572.30px;width:63.00px;text-align:right;transform-origin:100% 0;transform:scaleX(0.94);">4.50%</div>
<div class="t" style="top:589.76px;font-size:10px;color:#000;left:637.30px;width:63.60px;text-align:right;transform-origin:100% 0;transform:scaleX(0.93);">1-Jun-22</div>
<div class="t" style="top:603.51px;font-size:10px;color:#000;left:20.50px;width:130.20px;text-align:center;">19</div>
<div class="t" style="top:603.51px;font-size:10px;color:#000;left:150.70px;width:75.60px;text-align:right;">$12,667</div>
<div class="t" style="top:603.51px;font-size:10px;color:#000;left:231.30px;width:50.00px;text-align:right;">$9,146</div>
<div class="t" style="top:603.51px;font-size:10px;color:#000;left:286.30px;width:49.00px;text-align:right;">$3,522</div>
<div class="t" style="top:603.51px;font-size:10px;color:#000;left:340.30px;width:84.30px;text-align:right;">$2,435,293</div>
<div class="t" style="top:603.51px;font-size:10px;color:#000;left:429.60px;width:69.80px;text-align:right;">$175,968</div>
<div class="t" style="top:603.51px;font-size:10px;color:#000;left:504.40px;width:62.90px;text-align:right;">$240,676</div>
<div class="t" style="top:603.51px;font-size:10px;color:#000;left:572.30px;width:63.00px;text-align:right;transform-origin:100% 0;transform:scaleX(0.94);">4.50%</div>
<div class="t" style="top:603.51px;font-size:10px;color:#000;left:637.30px;width:63.60px;text-align:right;transform-origin:100% 0;transform:scaleX(0.93);">1-Jul-22</div>
<div class="t" style="top:617.26px;font-size:10px;color:#000;left:20.50px;width:130.20px;text-align:center;">20</div>
<div class="t" style="top:617.26px;font-size:10px;color:#000;left:150.70px;width:75.60px;text-align:right;">$12,667</div>
<div class="t" style="top:617.26px;font-size:10px;color:#000;left:231.30px;width:50.00px;text-align:right;">$9,132</div>
<div class="t" style="top:617.26px;font-size:10px;color:#000;left:286.30px;width:49.00px;text-align:right;">$3,535</div>
<div class="t" style="top:617.26px;font-size:10px;color:#000;left:340.30px;width:84.30px;text-align:right;">$2,431,758</div>
<div class="t" style="top:617.26px;font-size:10px;color:#000;left:429.60px;width:69.80px;text-align:right;">$185,101</div>
<div class="t" style="top:617.26px;font-size:10px;color:#000;left:504.40px;width:62.90px;text-align:right;">$253,343</div>
<div class="t" style="top:617.26px;font-size:10px;color:#000;left:572.30px;width:63.00px;text-align:right;transform-origin:100% 0;transform:scaleX(0.94);">4.50%</div>
<div class="t" style="top:617.26px;font-size:10px;color:#000;left:637.30px;width:63.60px;text-align:right;transform-origin:100% 0;transform:scaleX(0.93);">1-Aug-22</div>
<div class="t" style="top:631.02px;font-size:10px;color:#000;left:20.50px;width:130.20px;text-align:center;">21</div>
<div class="t" style="top:631.02px;font-size:10px;color:#000;left:150.70px;width:75.60px;text-align:right;">$12,667</div>
<div class="t" style="top:631.02px;font-size:10px;color:#000;left:231.30px;width:50.00px;text-align:right;">$9,119</div>
<div class="t" style="top:631.02px;font-size:10px;color:#000;left:286.30px;width:49.00px;text-align:right;">$3,548</div>
<div class="t" style="top:631.02px;font-size:10px;color:#000;left:340.30px;width:84.30px;text-align:right;">$2,428,210</div>
<div class="t" style="top:631.02px;font-size:10px;color:#000;left:429.60px;width:69.80px;text-align:right;">$194,220</div>
<div class="t" style="top:631.02px;font-size:10px;color:#000;left:504.40px;width:62.90px;text-align:right;">$266,010</div>
<div class="t" style="top:631.02px;font-size:10px;color:#000;left:572.30px;width:63.00px;text-align:right;transform-origin:100% 0;transform:scaleX(0.94);">4.50%</div>
<div class="t" style="top:631.02px;font-size:10px;color:#000;left:637.30px;width:63.60px;text-align:right;transform-origin:100% 0;transform:scaleX(0.93);">1-Sep-22</div>
<div class="t" style="top:644.77px;font-size:10px;color:#000;left:20.50px;width:130.20px;text-align:center;">22</div>
<div class="t" style="top:644.77px;font-size:10px;color:#000;left:150.70px;width:75.60px;text-align:right;">$12,667</div>
<div class="t" style="top:644.77px;font-size:10px;color:#000;left:231.30px;width:50.00px;text-align:right;">$9,106</div>
<div class="t" style="top:644.77px;font-size:10px;color:#000;left:286.30px;width:49.00px;text-align:right;">$3,561</div>
<div class="t" style="top:644.77px;font-size:10px;color:#000;left:340.30px;width:84.30px;text-align:right;">$2,424,649</div>
<div class="t" style="top:644.77px;font-size:10px;color:#000;left:429.60px;width:69.80px;text-align:right;">$203,326</div>
<div class="t" style="top:644.77px;font-size:10px;color:#000;left:504.40px;width:62.90px;text-align:right;">$278,677</div>
<div class="t" style="top:644.77px;font-size:10px;color:#000;left:572.30px;width:63.00px;text-align:right;transform-origin:100% 0;transform:scaleX(0.94);">4.50%</div>
<div class="t" style="top:644.77px;font-size:10px;color:#000;left:637.30px;width:63.60px;text-align:right;transform-origin:100% 0;transform:scaleX(0.93);">1-Oct-22</div>
<div class="t" style="top:658.52px;font-size:10px;color:#000;left:20.50px;width:130.20px;text-align:center;">23</div>
<div class="t" style="top:658.52px;font-size:10px;color:#000;left:150.70px;width:75.60px;text-align:right;">$12,667</div>
<div class="t" style="top:658.52px;font-size:10px;color:#000;left:231.30px;width:50.00px;text-align:right;">$9,092</div>
<div class="t" style="top:658.52px;font-size:10px;color:#000;left:286.30px;width:49.00px;text-align:right;">$3,575</div>
<div class="t" style="top:658.52px;font-size:10px;color:#000;left:340.30px;width:84.30px;text-align:right;">$2,421,074</div>
<div class="t" style="top:658.52px;font-size:10px;color:#000;left:429.60px;width:69.80px;text-align:right;">$212,418</div>
<div class="t" style="top:658.52px;font-size:10px;color:#000;left:504.40px;width:62.90px;text-align:right;">$291,344</div>
<div class="t" style="top:658.52px;font-size:10px;color:#000;left:572.30px;width:63.00px;text-align:right;transform-origin:100% 0;transform:scaleX(0.94);">4.50%</div>
<div class="t" style="top:658.52px;font-size:10px;color:#000;left:637.30px;width:63.60px;text-align:right;transform-origin:100% 0;transform:scaleX(0.93);">1-Nov-22</div>
<div class="t" style="top:672.28px;font-size:10px;color:#000;left:20.50px;width:130.20px;text-align:center;">24</div>
<div class="t" style="top:672.28px;font-size:10px;color:#000;left:150.70px;width:75.60px;text-align:right;">$12,667</div>
<div class="t" style="top:672.28px;font-size:10px;color:#000;left:231.30px;width:50.00px;text-align:right;">$9,079</div>
<div class="t" style="top:672.28px;font-size:10px;color:#000;left:286.30px;width:49.00px;text-align:right;">$3,588</div>
<div class="t" style="top:672.28px;font-size:10px;color:#000;left:340.30px;width:84.30px;text-align:right;">$2,417,486</div>
<div class="t" style="top:672.28px;font-size:10px;color:#000;left:429.60px;width:69.80px;text-align:right;">$221,497</div>
<div class="t" style="top:672.28px;font-size:10px;color:#000;left:504.40px;width:62.90px;text-align:right;">$304,011</div>
<div class="t" style="top:672.28px;font-size:10px;color:#000;left:572.30px;width:63.00px;text-align:right;transform-origin:100% 0;transform:scaleX(0.94);">4.50%</div>
<div class="t" style="top:672.28px;font-size:10px;color:#000;left:637.30px;width:63.60px;text-align:right;transform-origin:100% 0;transform:scaleX(0.93);">1-Dec-22</div>
<div class="t" style="top:686.03px;font-size:10px;color:#000;left:20.50px;width:130.20px;text-align:center;">25</div>
<div class="t" style="top:686.03px;font-size:10px;color:#000;left:150.70px;width:75.60px;text-align:right;">$12,667</div>
<div class="t" style="top:686.03px;font-size:10px;color:#000;left:231.30px;width:50.00px;text-align:right;">$9,066</div>
<div class="t" style="top:686.03px;font-size:10px;color:#000;left:286.30px;width:49.00px;text-align:right;">$3,602</div>
<div class="t" style="top:686.03px;font-size:10px;color:#000;left:340.30px;width:84.30px;text-align:right;">$2,413,884</div>
<div class="t" style="top:686.03px;font-size:10px;color:#000;left:429.60px;width:69.80px;text-align:right;">$230,563</div>
<div class="t" style="top:686.03px;font-size:10px;color:#000;left:504.40px;width:62.90px;text-align:right;">$316,678</div>
<div class="t" style="top:686.03px;font-size:10px;color:#000;left:572.30px;width:63.00px;text-align:right;transform-origin:100% 0;transform:scaleX(0.94);">4.50%</div>
<div class="t" style="top:686.03px;font-size:10px;color:#000;left:637.30px;width:63.60px;text-align:right;transform-origin:100% 0;transform:scaleX(0.93);">1-Jan-23</div>
<div class="t" style="top:699.78px;font-size:10px;color:#000;left:20.50px;width:130.20px;text-align:center;">26</div>
<div class="t" style="top:699.78px;font-size:10px;color:#000;left:150.70px;width:75.60px;text-align:right;">$12,667</div>
<div class="t" style="top:699.78px;font-size:10px;color:#000;left:231.30px;width:50.00px;text-align:right;">$9,052</div>
<div class="t" style="top:699.78px;font-size:10px;color:#000;left:286.30px;width:49.00px;text-align:right;">$3,615</div>
<div class="t" style="top:699.78px;font-size:10px;color:#000;left:340.30px;width:84.30px;text-align:right;">$2,410,269</div>
<div class="t" style="top:699.78px;font-size:10px;color:#000;left:429.60px;width:69.80px;text-align:right;">$239,615</div>
<div class="t" style="top:699.78px;font-size:10px;color:#000;left:504.40px;width:62.90px;text-align:right;">$329,345</div>
<div class="t" style="top:699.78px;font-size:10px;color:#000;left:572.30px;width:63.00px;text-align:right;transform-origin:100% 0;transform:scaleX(0.94);">4.50%</div>
<div class="t" style="top:699.78px;font-size:10px;color:#000;left:637.30px;width:63.60px;text-align:right;transform-origin:100% 0;transform:scaleX(0.93);">1-Feb-23</div>
<div class="t" style="top:713.53px;font-size:10px;color:#000;left:20.50px;width:130.20px;text-align:center;">27</div>
<div class="t" style="top:713.53px;font-size:10px;color:#000;left:150.70px;width:75.60px;text-align:right;">$12,667</div>
<div class="t" style="top:713.53px;font-size:10px;color:#000;left:231.30px;width:50.00px;text-align:right;">$9,039</div>
<div class="t" style="top:713.53px;font-size:10px;color:#000;left:286.30px;width:49.00px;text-align:right;">$3,629</div>
<div class="t" style="top:713.53px;font-size:10px;color:#000;left:340.30px;width:84.30px;text-align:right;">$2,406,641</div>
<div class="t" style="top:713.53px;font-size:10px;color:#000;left:429.60px;width:69.80px;text-align:right;">$248,653</div>
<div class="t" style="top:713.53px;font-size:10px;color:#000;left:504.40px;width:62.90px;text-align:right;">$342,013</div>
<div class="t" style="top:713.53px;font-size:10px;color:#000;left:572.30px;width:63.00px;text-align:right;transform-origin:100% 0;transform:scaleX(0.94);">4.50%</div>
<div class="t" style="top:713.53px;font-size:10px;color:#000;left:637.30px;width:63.60px;text-align:right;transform-origin:100% 0;transform:scaleX(0.93);">1-Mar-23</div>
<div class="t" style="top:727.29px;font-size:10px;color:#000;left:20.50px;width:130.20px;text-align:center;">28</div>
<div class="t" style="top:727.29px;font-size:10px;color:#000;left:150.70px;width:75.60px;text-align:right;">$12,667</div>
<div class="t" style="top:727.29px;font-size:10px;color:#000;left:231.30px;width:50.00px;text-align:right;">$9,025</div>
<div class="t" style="top:727.29px;font-size:10px;color:#000;left:286.30px;width:49.00px;text-align:right;">$3,642</div>
<div class="t" style="top:727.29px;font-size:10px;color:#000;left:340.30px;width:84.30px;text-align:right;">$2,402,998</div>
<div class="t" style="top:727.29px;font-size:10px;color:#000;left:429.60px;width:69.80px;text-align:right;">$257,678</div>
<div class="t" style="top:727.29px;font-size:10px;color:#000;left:504.40px;width:62.90px;text-align:right;">$354,680</div>
<div class="t" style="top:727.29px;font-size:10px;color:#000;left:572.30px;width:63.00px;text-align:right;transform-origin:100% 0;transform:scaleX(0.94);">4.50%</div>
<div class="t" style="top:727.29px;font-size:10px;color:#000;left:637.30px;width:63.60px;text-align:right;transform-origin:100% 0;transform:scaleX(0.93);">1-Apr-23</div>
<div class="t" style="top:741.04px;font-size:10px;color:#000;left:20.50px;width:130.20px;text-align:center;">29</div>
<div class="t" style="top:741.04px;font-size:10px;color:#000;left:150.70px;width:75.60px;text-align:right;">$12,667</div>
<div class="t" style="top:741.04px;font-size:10px;color:#000;left:231.30px;width:50.00px;text-align:right;">$9,011</div>
<div class="t" style="top:741.04px;font-size:10px;color:#000;left:286.30px;width:49.00px;text-align:right;">$3,656</div>
<div class="t" style="top:741.04px;font-size:10px;color:#000;left:340.30px;width:84.30px;text-align:right;">$2,399,343</div>
<div class="t" style="top:741.04px;font-size:10px;color:#000;left:429.60px;width:69.80px;text-align:right;">$266,689</div>
<div class="t" style="top:741.04px;font-size:10px;color:#000;left:504.40px;width:62.90px;text-align:right;">$367,347</div>
<div class="t" style="top:741.04px;font-size:10px;color:#000;left:572.30px;width:63.00px;text-align:right;transform-origin:100% 0;transform:scaleX(0.94);">4.50%</div>
<div class="t" style="top:741.04px;font-size:10px;color:#000;left:637.30px;width:63.60px;text-align:right;transform-origin:100% 0;transform:scaleX(0.93);">1-May-23</div>
<div class="t" style="top:754.79px;font-size:10px;color:#000;left:20.50px;width:130.20px;text-align:center;">30</div>
<div class="t" style="top:754.79px;font-size:10px;color:#000;left:150.70px;width:75.60px;text-align:right;">$12,667</div>
<div class="t" style="top:754.79px;font-size:10px;color:#000;left:231.30px;width:50.00px;text-align:right;">$8,998</div>
<div class="t" style="top:754.79px;font-size:10px;color:#000;left:286.30px;width:49.00px;text-align:right;">$3,670</div>
<div class="t" style="top:754.79px;font-size:10px;color:#000;left:340.30px;width:84.30px;text-align:right;">$2,395,673</div>
<div class="t" style="top:754.79px;font-size:10px;color:#000;left:429.60px;width:69.80px;text-align:right;">$275,687</div>
<div class="t" style="top:754.79px;font-size:10px;color:#000;left:504.40px;width:62.90px;text-align:right;">$380,014</div>
<div class="t" style="top:754.79px;font-size:10px;color:#000;left:572.30px;width:63.00px;text-align:right;transform-origin:100% 0;transform:scaleX(0.94);">4.50%</div>
<div class="t" style="top:754.79px;font-size:10px;color:#000;left:637.30px;width:63.60px;text-align:right;transform-origin:100% 0;transform:scaleX(0.93);">1-Jun-23</div>
<div class="t" style="top:768.55px;font-size:10px;color:#000;left:20.50px;width:130.20px;text-align:center;">31</div>
<div class="t" style="top:768.55px;font-size:10px;color:#000;left:150.70px;width:75.60px;text-align:right;">$12,667</div>
<div class="t" style="top:768.55px;font-size:10px;color:#000;left:231.30px;width:50.00px;text-align:right;">$8,984</div>
<div class="t" style="top:768.55px;font-size:10px;color:#000;left:286.30px;width:49.00px;text-align:right;">$3,683</div>
<div class="t" style="top:768.55px;font-size:10px;color:#000;left:340.30px;width:84.30px;text-align:right;">$2,391,990</div>
<div class="t" style="top:768.55px;font-size:10px;color:#000;left:429.60px;width:69.80px;text-align:right;">$284,671</div>
<div class="t" style="top:768.55px;font-size:10px;color:#000;left:504.40px;width:62.90px;text-align:right;">$392,681</div>
<div class="t" style="top:768.55px;font-size:10px;color:#000;left:572.30px;width:63.00px;text-align:right;transform-origin:100% 0;transform:scaleX(0.94);">4.50%</div>
<div class="t" style="top:768.55px;font-size:10px;color:#000;left:637.30px;width:63.60px;text-align:right;transform-origin:100% 0;transform:scaleX(0.93);">1-Jul-23</div>
<div class="t" style="top:782.30px;font-size:10px;color:#000;left:20.50px;width:130.20px;text-align:center;">32</div>
<div class="t" style="top:782.30px;font-size:10px;color:#000;left:150.70px;width:75.60px;text-align:right;">$12,667</div>
<div class="t" style="top:782.30px;font-size:10px;color:#000;left:231.30px;width:50.00px;text-align:right;">$8,970</div>
<div class="t" style="top:782.30px;font-size:10px;color:#000;left:286.30px;width:49.00px;text-align:right;">$3,697</div>
<div class="t" style="top:782.30px;font-size:10px;color:#000;left:340.30px;width:84.30px;text-align:right;">$2,388,292</div>
<div class="t" style="top:782.30px;font-size:10px;color:#000;left:429.60px;width:69.80px;text-align:right;">$293,641</div>
<div class="t" style="top:782.30px;font-size:10px;color:#000;left:504.40px;width:62.90px;text-align:right;">$405,348</div>
<div class="t" style="top:782.30px;font-size:10px;color:#000;left:572.30px;width:63.00px;text-align:right;transform-origin:100% 0;transform:scaleX(0.94);">4.50%</div>
<div class="t" style="top:782.30px;font-size:10px;color:#000;left:637.30px;width:63.60px;text-align:right;transform-origin:100% 0;transform:scaleX(0.93);">1-Aug-23</div>
<div class="t" style="top:796.05px;font-size:10px;color:#000;left:20.50px;width:130.20px;text-align:center;">33</div>
<div class="t" style="top:796.05px;font-size:10px;color:#000;left:150.70px;width:75.60px;text-align:right;">$12,667</div>
<div class="t" style="top:796.05px;font-size:10px;color:#000;left:231.30px;width:50.00px;text-align:right;">$8,956</div>
<div class="t" style="top:796.05px;font-size:10px;color:#000;left:286.30px;width:49.00px;text-align:right;">$3,711</div>
<div class="t" style="top:796.05px;font-size:10px;color:#000;left:340.30px;width:84.30px;text-align:right;">$2,384,581</div>
<div class="t" style="top:796.05px;font-size:10px;color:#000;left:429.60px;width:69.80px;text-align:right;">$302,597</div>
<div class="t" style="top:796.05px;font-size:10px;color:#000;left:504.40px;width:62.90px;text-align:right;">$418,015</div>
<div class="t" style="top:796.05px;font-size:10px;color:#000;left:572.30px;width:63.00px;text-align:right;transform-origin:100% 0;transform:scaleX(0.94);">4.50%</div>
<div class="t" style="top:796.05px;font-size:10px;color:#000;left:637.30px;width:63.60px;text-align:right;transform-origin:100% 0;transform:scaleX(0.93);">1-Sep-23</div>
<div class="t" style="top:809.81px;font-size:10px;color:#000;left:20.50px;width:130.20px;text-align:center;">34</div>
<div class="t" style="top:809.81px;font-size:10px;color:#000;left:150.70px;width:75.60px;text-align:right;">$12,667</div>
<div class="t" style="top:809.81px;font-size:10px;color:#000;left:231.30px;width:50.00px;text-align:right;">$8,942</div>
<div class="t" style="top:809.81px;font-size:10px;color:#000;left:286.30px;width:49.00px;text-align:right;">$3,725</div>
<div class="t" style="top:809.81px;font-size:10px;color:#000;left:340.30px;width:84.30px;text-align:right;">$2,380,856</div>
<div class="t" style="top:809.81px;font-size:10px;color:#000;left:429.60px;width:69.80px;text-align:right;">$311,539</div>
<div class="t" style="top:809.81px;font-size:10px;color:#000;left:504.40px;width:62.90px;text-align:right;">$430,683</div>
<div class="t" style="top:809.81px;font-size:10px;color:#000;left:572.30px;width:63.00px;text-align:right;transform-origin:100% 0;transform:scaleX(0.94);">4.50%</div>
<div class="t" style="top:809.81px;font-size:10px;color:#000;left:637.30px;width:63.60px;text-align:right;transform-origin:100% 0;transform:scaleX(0.93);">1-Oct-23</div>
<div class="t" style="left:23.25px;top:187.81px;font-size:11.23px;color:#000;font-weight:bold;">Debt Schedule</div>
<div class="t" style="left:23.20px;top:218.12px;font-size:10.00px;color:#000;transform-origin:0 0;transform:scaleX(0.980);">Financed Amount</div>
<div class="t" style="left:23.20px;top:232.06px;font-size:10.00px;color:#000;transform-origin:0 0;transform:scaleX(0.956);">Loan Term</div>
<div class="t" style="left:23.20px;top:245.97px;font-size:10.00px;color:#000;transform-origin:0 0;transform:scaleX(0.978);">Starting Annual Interest Rate</div>
<div class="t" style="left:23.20px;top:259.92px;font-size:10.00px;color:#000;transform-origin:0 0;transform:scaleX(0.964);">Payment per Year</div>
<div class="t" style="left:23.20px;top:273.92px;font-size:10.00px;color:#000;transform-origin:0 0;transform:scaleX(0.967);">First Payment Date</div>
<div class="rb">
<svg style="left:12px;top:11.5px" width="14" height="14" viewBox="0 0 14 14">
<rect x="3.5" y="0.5" width="10" height="13" rx="1" fill="#21a366"/>
<rect x="3.5" y="0.5" width="10" height="4.4" rx="1" fill="#33c481"/>
<rect x="3.5" y="9" width="10" height="4.5" rx="1" fill="#107c41"/>
<rect x="0.2" y="2.7" width="8.1" height="9.2" rx="1" fill="#107c41"/>
<path d="M2.2 4.6 L6.3 10 M6.3 4.6 L2.2 10" stroke="#fff" stroke-width="1.5"/>
</svg>
<div class="a" style="left:77px;top:10.3px;width:33.5px;height:16px;border:1px solid #cfcfcf;border-radius:8px;background:#f7f7f7"></div>
<div class="a" style="left:79.5px;top:13px;width:11px;height:11px;border-radius:6px;background:#bdbdbd"></div>
<svg style="left:120px;top:12.5px" width="13" height="13" viewBox="0 0 13 13" fill="none" stroke="#c4c4c4" stroke-width="1">
<path d="M0.5 0.5 H10 L12.5 3 V12.5 H0.5 Z"/><rect x="3" y="0.5" width="6" height="3.5"/><rect x="3" y="7.5" width="7" height="5"/></svg>
<svg style="left:143px;top:12.5px" width="12" height="12" viewBox="0 0 12 12" fill="none" stroke="#c4c4c4" stroke-width="1.1">
<path d="M1.5 1 V5 H5.5"/><path d="M1.8 4.8 C3.5 2.2 8.5 1.8 10.3 5 C11.6 7.6 9.5 10.8 6 11.5"/></svg>
<svg style="left:172.5px;top:12.5px" width="12" height="12" viewBox="0 0 12 12" fill="none" stroke="#c4c4c4" stroke-width="1.1">
<path d="M10.5 1 V5 H6.5"/><path d="M10.2 4.8 C8.5 2.2 3.5 1.8 1.7 5 C0.4 7.6 2.5 10.8 6 11.5"/></svg>
<svg style="left:159px;top:16.5px" width="6" height="4" viewBox="0 0 6 4" fill="none" stroke="#c4c4c4" stroke-width="1"><path d="M0.5 0.5 L3 3 L5.5 0.5"/></svg>
<svg style="left:189px;top:16.5px" width="6" height="4" viewBox="0 0 6 4" fill="none" stroke="#c4c4c4" stroke-width="1"><path d="M0.5 0.5 L3 3 L5.5 0.5"/></svg>
<svg style="left:205px;top:15.5px" width="7" height="6" viewBox="0 0 7 6" fill="none" stroke="#c4c4c4" stroke-width="1"><path d="M0.5 0.5 H6.5 M1 2.5 L3.5 5 L6 2.5"/></svg>
<div class="a" style="left:356.5px;top:17.8px;width:3px;height:3px;border-radius:2px;background:#a8a8a8"></div>
<svg style="left:434px;top:17px" width="8" height="5" viewBox="0 0 8 5" fill="none" stroke="#a8a8a8" stroke-width="1"><path d="M0.5 0.5 L4 4 L7.5 0.5"/></svg>
<div class="a" style="left:662.5px;top:6.6px;width:287.2px;height:24.5px;border:1px solid #d6d6d6;border-bottom-color:#c4c4c4;border-radius:4px;background:#f0f0f0"></div>
<svg style="left:673px;top:13px" width="12" height="12" viewBox="0 0 12 12" fill="none" stroke="#b8b8b8" stroke-width="1.1"><circle cx="7.3" cy="4.7" r="3.6"/><path d="M4.7 7.3 L0.8 11.2"/></svg>
<div class="a" style="left:1423px;top:9.25px;width:19px;height:19px;border-radius:10px;background:#0f4a8a"></div>
<svg style="left:1464px;top:14px" width="10" height="11" viewBox="0 0 10 11" fill="none" stroke="#c8c8c8" stroke-width="1"><path d="M3 7.5 C1.5 6.5 1 5.2 1 4 C1 2 2.8 0.5 5 0.5 C7.2 0.5 9 2 9 4 C9 5.2 8.5 6.5 7 7.5 V8.5 H3 Z M3.5 10 H6.5"/></svg>
<div class="a" style="left:1502px;top:18px;width:8.5px;height:1px;background:#bdbdbd"></div>
<svg style="left:1539px;top:14.5px" width="9" height="9" viewBox="0 0 9 9" fill="none" stroke="#c4c4c4" stroke-width="1"><rect x="0.5" y="2.5" width="6" height="6" rx="1"/><path d="M2.5 2.5 V1.5 C2.5 1 3 0.5 3.5 0.5 H7.5 C8 0.5 8.5 1 8.5 1.5 V5.5 C8.5 6 8 6.5 7.5 6.5 H6.5"/></svg>
<svg style="left:1577px;top:15px" width="9" height="8" viewBox="0 0 9 8" fill="none" stroke="#b8b8b8" stroke-width="1"><path d="M0.5 0 L8.5 8 M8.5 0 L0.5 8"/></svg>
<div class="a" style="left:52.5px;top:58.9px;width:30px;height:1.9px;border-radius:1px;background:#107c41"></div>
<div class="a" style="left:1429.4px;top:40.6px;width:73px;height:18.8px;border:1px solid #c2c2c2;border-radius:3px;background:#fff"></div>
<svg style="left:1433px;top:45px" width="10" height="10" viewBox="0 0 10 10" fill="none" stroke="#333" stroke-width="1"><path d="M0.5 0.5 H9.5 V6.5 H4 L2 9 V6.5 H0.5 Z"/></svg>
<div class="a" style="left:1509px;top:40.6px;width:55.1px;height:18.8px;border-radius:3px;background:#107c41"></div>
<svg style="left:1512px;top:44.5px" width="10" height="10" viewBox="0 0 10 10" fill="none" stroke="#fff" stroke-width="1"><path d="M0.5 4 V9.5 H8 V7"/><path d="M2.5 7.5 C3 4.5 5 3.5 7.5 3.5 M6 1 L8.5 3.5 L6 6"/></svg>
<svg style="left:1557px;top:49px" width="5" height="3" viewBox="0 0 5 3" fill="none" stroke="#fff" stroke-width="1"><path d="M0.5 0.5 L2.5 2.5 L4.5 0.5"/></svg>
<svg style="left:1575.5px;top:43px" width="13" height="13" viewBox="0 0 13 13" fill="none" stroke="#333" stroke-width="1"><circle cx="4.5" cy="6" r="2.5"/><path d="M0.5 12.5 C1 9.5 2.5 8.5 4.5 8.5 C6.5 8.5 8 9.5 8.5 12.5"/><path d="M5 2.5 V0.5 H12.5 V6 H10 L8.5 7.5"/></svg>
<div class="t" style="left:38.20px;top:14.50px;font-size:9.00px;color:#b4b4b4;transform-origin:0 0;transform:scaleX(0.853);">AutoSave</div>
<div class="t" style="left:95.00px;top:14.30px;font-size:9.00px;color:#b4b4b4;transform-origin:0 0;transform:scaleX(0.845);">Off</div>
<div class="t" style="left:230.50px;top:14.46px;font-size:9.80px;color:#b2b2b2;transform-origin:0 0;transform:scaleX(0.925);">Retail Sales Scaling Locations</div>
<div class="t" style="left:363.75px;top:14.46px;font-size:9.80px;color:#b2b2b2;transform-origin:0 0;transform:scaleX(0.901);">Saved to this PC</div>
<div class="t" style="left:694.80px;top:13.41px;font-size:9.80px;color:#b4b4b4;">Search</div>
<div class="t" style="left:1428.20px;top:15.33px;font-size:7.00px;color:#fff;transform-origin:0 0;transform:scaleX(1.077);">JV</div>
<div class="t" style="left:17.20px;top:45.87px;font-size:10.50px;color:#262626;transform-origin:0 0;transform:scaleX(0.875);">File</div>
<div class="t" style="left:96.30px;top:45.87px;font-size:10.50px;color:#262626;">Insert</div>
<div class="t" style="left:138.30px;top:45.87px;font-size:10.50px;color:#262626;transform-origin:0 0;transform:scaleX(0.973);">Page Layout</div>
<div class="t" style="left:211.00px;top:45.87px;font-size:10.50px;color:#262626;">Formulas</div>
<div class="t" style="left:269.50px;top:45.87px;font-size:10.50px;color:#262626;">Data</div>
<div class="t" style="left:306.50px;top:45.87px;font-size:10.50px;color:#262626;transform-origin:0 0;transform:scaleX(0.959);">Review</div>
<div class="t" style="left:355.00px;top:45.87px;font-size:10.50px;color:#262626;">View</div>
<div class="t" style="left:392.50px;top:45.87px;font-size:10.50px;color:#262626;">Developer</div>
<div class="t" style="left:455.50px;top:45.87px;font-size:10.50px;color:#262626;transform-origin:0 0;transform:scaleX(1.019);">Help</div>
<div class="t" style="left:492.50px;top:45.87px;font-size:10.50px;color:#262626;transform-origin:0 0;transform:scaleX(1.036);">Acrobat</div>
<div class="t" style="left:52.80px;top:45.87px;font-size:10.50px;color:#1a1a1a;font-weight:bold;">Home</div>
<div class="t" style="left:1446.00px;top:44.82px;font-size:10.60px;color:#262626;">Comments</div>
<div class="t" style="left:1525.40px;top:44.82px;font-size:10.60px;color:#fff;transform-origin:0 0;transform:scaleX(0.926);-webkit-text-stroke:0.3px #fff;">Share</div>
<div class="a" style="left:5.6px;top:62.5px;width:1588px;height:77.5px;border-radius:8px;background:#fff;box-shadow:0 1.5px 3px rgba(0,0,0,0.16)"></div>
<svg style="left:22px;top:68px" width="24" height="26" viewBox="0 0 24 26" fill="none">
<path d="M4.5 4.5 H1.3 V22.7 H11" stroke="#f0a030" stroke-width="1.4"/><path d="M14.7 4.5 H17.7 V10" stroke="#f0a030" stroke-width="1.4"/>
<path d="M4.8 6.8 V4.5 C4.8 3.8 5.3 3.5 6 3.5 H7.5 C8 2 8.8 1.2 9.7 1.2 C10.6 1.2 11.4 2 11.9 3.5 H13.4 C14.1 3.5 14.6 3.8 14.6 4.5 V6.8 Z" fill="#fff" stroke="#777" stroke-width="1.2"/>
<rect x="11.3" y="10.3" width="11" height="14" rx="1.6" fill="#fff" stroke="#777" stroke-width="1.3"/></svg>
<svg style="left:28.00px;top:111.70px" width="6" height="3.0" viewBox="0 0 6 3.0" fill="none" stroke="#444" stroke-width="1.2"><path d="M0.5 0.5 L3.0 2.5 L5.5 0.5"/></svg>
<svg style="left:54px;top:68px" width="10" height="13" viewBox="0 0 10 13" fill="none">
<path d="M2.3 0.5 L6.8 9.3 M7.7 0.5 L3.2 9.3" stroke="#444" stroke-width="1"/><circle cx="2.3" cy="11" r="1.8" fill="#3b95e0"/><circle cx="7.3" cy="11" r="1.8" fill="#3b95e0"/></svg>
<svg style="left:52px;top:88px" width="14" height="14" viewBox="0 0 14 14" fill="none" stroke="#555" stroke-width="1.1">
<path d="M5 10.5 H0.6 V0.6 H4.5 C5 0.6 5.5 1 5.5 1.5 V3"/><path d="M5.3 3.3 H10 L12.6 6 V12.3 H5.3 Z"/><path d="M9.8 3.5 V6.2 H12.5"/><rect x="7.3" y="8.5" width="3" height="2" fill="#aaa" stroke="none"/></svg>
<svg style="left:102.00px;top:93.00px" width="6" height="3.0" viewBox="0 0 6 3.0" fill="none" stroke="#444" stroke-width="1.2"><path d="M0.5 0.5 L3.0 2.5 L5.5 0.5"/></svg>
<svg style="left:52.5px;top:108px" width="13" height="13" viewBox="0 0 13 13" fill="none">
<path d="M0.8 6.3 L6 3.8 L8.6 6.5 L6.3 11.5 Z" fill="#fde0c0" stroke="#e8821e" stroke-width="1.2"/><path d="M3 8 L5.8 10" stroke="#e8821e" stroke-width="1"/>
<path d="M6 3.8 L8.6 6.5 L10 5 L7.3 2.4 Z" fill="#fff" stroke="#555" stroke-width="1"/><path d="M8.7 3.8 L11.8 0.8 M9.5 4.6 L12.3 1.8" stroke="#555" stroke-width="1.1"/></svg>
<svg style="left:132px;top:129.5px" width="7" height="7" viewBox="0 0 7 7" fill="none" stroke="#555" stroke-width="0.9"><path d="M0.5 3 V0.5 H6.5 V6.5 H3.5"/><path d="M2 2 L5.5 5.5 M5.5 3 V5.5 H3"/></svg>
<div class="a" style="left:140.30px;top:66px;width:1px;height:69px;background:#e0e0e0"></div>
<div class="a" style="left:147.4px;top:71.3px;width:89.3px;height:18.2px;border:1px solid #c8c8c8;border-radius:3px"></div>
<svg style="left:229.90px;top:79.55px" width="5" height="2.5" viewBox="0 0 5 2.5" fill="none" stroke="#444" stroke-width="1.2"><path d="M0.5 0.5 L2.5 2.0 L4.5 0.5"/></svg>
<div class="a" style="left:239.2px;top:71.3px;width:37.8px;height:18.2px;border:1px solid #c8c8c8;border-radius:3px"></div>
<svg style="left:270.10px;top:79.55px" width="5" height="2.5" viewBox="0 0 5 2.5" fill="none" stroke="#444" stroke-width="1.2"><path d="M0.5 0.5 L2.5 2.0 L4.5 0.5"/></svg>
<svg style="left:291px;top:74px" width="5" height="3" viewBox="0 0 5 3" fill="none" stroke="#333" stroke-width="0.9"><path d="M0.5 2.5 L2.5 0.5 L4.5 2.5"/></svg>
<svg style="left:311px;top:74px" width="5" height="3" viewBox="0 0 5 3" fill="none" stroke="#2b7cd3" stroke-width="0.9"><path d="M0.5 0.5 L2.5 2.5 L4.5 0.5"/></svg>
<div class="t" style="left:174px;top:99.63px;font-size:11px;color:#333;font-family:'Liberation Serif',serif;font-style:italic">I</div>
<div class="a" style="left:192px;top:111px;width:8px;height:1px;background:#333"></div>
<svg style="left:208.80px;top:103.75px" width="5" height="2.5" viewBox="0 0 5 2.5" fill="none" stroke="#444" stroke-width="1.2"><path d="M0.5 0.5 L2.5 2.0 L4.5 0.5"/></svg>
<div class="a" style="left:219.10px;top:97px;width:1px;height:18px;background:#e0e0e0"></div>
<svg style="left:224px;top:99.5px" width="12" height="11" viewBox="0 0 12 11" fill="none" stroke="#777" stroke-width="1"><rect x="0.5" y="0.5" width="11" height="10"/><path d="M6 0.5 V10.5 M0.5 5.5 H11.5"/></svg>
<svg style="left:242.50px;top:103.75px" width="5" height="2.5" viewBox="0 0 5 2.5" fill="none" stroke="#444" stroke-width="1.2"><path d="M0.5 0.5 L2.5 2.0 L4.5 0.5"/></svg>
<div class="a" style="left:252.70px;top:97px;width:1px;height:18px;background:#e0e0e0"></div>
<svg style="left:258px;top:97.5px" width="13" height="14" viewBox="0 0 13 14" fill="none">
<path d="M4 1.5 L9 6.5 L5.5 10 L1 5.5 Z" stroke="#555" stroke-width="1"/><path d="M9 6.5 C10.5 4.5 11.5 4 11.5 3 " stroke="#2b7cd3" stroke-width="1.2"/>
<rect x="0" y="11" width="12.5" height="2.8" fill="#ffeb00"/></svg>
<svg style="left:276.30px;top:103.75px" width="5" height="2.5" viewBox="0 0 5 2.5" fill="none" stroke="#444" stroke-width="1.2"><path d="M0.5 0.5 L2.5 2.0 L4.5 0.5"/></svg>
<div class="a" style="left:289.7px;top:108.7px;width:12.8px;height:2.8px;background:#e00000"></div>
<svg style="left:308.20px;top:103.75px" width="5" height="2.5" viewBox="0 0 5 2.5" fill="none" stroke="#444" stroke-width="1.2"><path d="M0.5 0.5 L2.5 2.0 L4.5 0.5"/></svg>
<svg style="left:314.5px;top:129.5px" width="7" height="7" viewBox="0 0 7 7" fill="none" stroke="#555" stroke-width="0.9"><path d="M0.5 3 V0.5 H6.5 V6.5 H3.5"/><path d="M2 2 L5.5 5.5 M5.5 3 V5.5 H3"/></svg>
<div class="a" style="left:322.80px;top:66px;width:1px;height:69px;background:#e0e0e0"></div>
<svg style="left:333.8px;top:74.3px" width="11" height="12"><rect x="0.0" y="0.0" width="11" height="1.1" fill="#555"/><rect x="2.0" y="3.2" width="7" height="1.1" fill="#555"/><rect x="0.0" y="6.4" width="11" height="1.1" fill="#555"/></svg>
<svg style="left:353.9px;top:76.5px" width="11" height="12"><rect x="0.0" y="0.0" width="11" height="1.1" fill="#555"/><rect x="2.0" y="3.2" width="7" height="1.1" fill="#555"/><rect x="0.0" y="6.4" width="11" height="1.1" fill="#555"/></svg>
<div class="a" style="left:370.4px;top:71.4px;width:18.5px;height:18.3px;border:1px solid #a8a8a8;border-radius:3px;background:#f0f0f0"></div>
<svg style="left:374.3px;top:79px" width="11" height="12"><rect x="0.0" y="0.0" width="11" height="1.1" fill="#555"/><rect x="2.0" y="3.2" width="7" height="1.1" fill="#555"/><rect x="0.0" y="6.4" width="11" height="1.1" fill="#555"/></svg>
<div class="a" style="left:390.30px;top:73px;width:1px;height:16px;background:#e0e0e0"></div>
<svg style="left:394.5px;top:73.5px" width="14" height="14" viewBox="0 0 14 14"><text x="-1" y="9" font-size="8.5" fill="#444" font-family="Liberation Sans" transform="rotate(-55 4 6)">ab</text>
<path d="M4.3 11.5 L12.5 4.5" fill="none" stroke="#2b7cd3" stroke-width="1"/><path d="M9.8 3.8 L13.2 3.8 L12.3 7.2 Z" fill="#2b7cd3"/></svg>
<svg style="left:412.00px;top:79.25px" width="5" height="2.5" viewBox="0 0 5 2.5" fill="none" stroke="#444" stroke-width="1.2"><path d="M0.5 0.5 L2.5 2.0 L4.5 0.5"/></svg>
<svg style="left:333.8px;top:100.2px" width="11" height="12"><rect x="0" y="0.0" width="11" height="1.1" fill="#555"/><rect x="0" y="3.1" width="7" height="1.1" fill="#555"/><rect x="0" y="6.2" width="11" height="1.1" fill="#555"/><rect x="0" y="9.3" width="7" height="1.1" fill="#555"/></svg>
<svg style="left:353.9px;top:100.2px" width="11" height="12"><rect x="0.0" y="0.0" width="11" height="1.1" fill="#555"/><rect x="2.0" y="3.1" width="7" height="1.1" fill="#555"/><rect x="0.0" y="6.2" width="11" height="1.1" fill="#555"/><rect x="2.0" y="9.3" width="7" height="1.1" fill="#555"/></svg>
<svg style="left:374.2px;top:100.2px" width="11" height="12"><rect x="0" y="0.0" width="11" height="1.1" fill="#555"/><rect x="4" y="3.1" width="7" height="1.1" fill="#555"/><rect x="0" y="6.2" width="11" height="1.1" fill="#555"/><rect x="4" y="9.3" width="7" height="1.1" fill="#555"/></svg>
<div class="a" style="left:390.00px;top:97px;width:1px;height:18px;background:#e0e0e0"></div>
<svg style="left:395.5px;top:100px" width="12" height="11" viewBox="0 0 12 11" fill="none">
<rect x="0" y="0" width="11.5" height="1.1" fill="#555"/><rect x="5" y="3.3" width="6.5" height="1.1" fill="#555"/><rect x="5" y="6.6" width="6.5" height="1.1" fill="#555"/><rect x="0" y="9.8" width="11.5" height="1.1" fill="#555"/>
<path d="M4 5.5 H0.5 M2.2 3.8 L0.5 5.5 L2.2 7.2" stroke="#2b7cd3" stroke-width="1"/></svg>
<svg style="left:415.5px;top:100px" width="12" height="11" viewBox="0 0 12 11" fill="none">
<rect x="0" y="0" width="11.5" height="1.1" fill="#555"/><rect x="5" y="3.3" width="6.5" height="1.1" fill="#555"/><rect x="5" y="6.6" width="6.5" height="1.1" fill="#555"/><rect x="0" y="9.8" width="11.5" height="1.1" fill="#555"/>
<path d="M0.5 5.5 H4 M2.3 3.8 L4 5.5 L2.3 7.2" stroke="#2b7cd3" stroke-width="1"/></svg>
<div class="a" style="left:435.20px;top:70.7px;width:1px;height:47.3px;background:#e0e0e0"></div>
<svg style="left:444px;top:73.5px" width="13" height="14" viewBox="0 0 13 14"><text x="0" y="7" font-size="8" fill="#444" font-family="Liberation Sans">ab</text><text x="0" y="13.5" font-size="7" fill="#444" font-family="Liberation Sans">c</text>
<path d="M5.5 10.5 H10.5 C12.5 10.5 12.5 6.5 10.5 6.5 H9 M7 8.8 L5.3 10.5 L7 12.2" fill="none" stroke="#2b7cd3" stroke-width="1"/></svg>
<svg style="left:443px;top:99px" width="12" height="12" viewBox="0 0 12 12" fill="none">
<rect x="0.5" y="0.5" width="11" height="11" stroke="#2b7cd3" stroke-width="1"/><rect x="2" y="4" width="8" height="4" fill="#9cc8f0"/><path d="M2.5 6 H9.5 M4 4.5 L2.5 6 L4 7.5 M8 4.5 L9.5 6 L8 7.5" stroke="#1a5fa8" stroke-width="0.9"/><path d="M0.5 3 H11.5 M0.5 9 H11.5" stroke="#2b7cd3" stroke-width="0.8"/></svg>
<svg style="left:538.40px;top:104.25px" width="5" height="2.5" viewBox="0 0 5 2.5" fill="none" stroke="#444" stroke-width="1.2"><path d="M0.5 0.5 L2.5 2.0 L4.5 0.5"/></svg>
<svg style="left:547px;top:129px" width="7" height="7" viewBox="0 0 7 7" fill="none" stroke="#555" stroke-width="0.9"><path d="M0.5 3 V0.5 H6.5 V6.5 H3.5"/><path d="M2 2 L5.5 5.5 M5.5 3 V5.5 H3"/></svg>
<div class="a" style="left:555.80px;top:66px;width:1px;height:69px;background:#e0e0e0"></div>
<div class="a" style="left:563.5px;top:71.4px;width:112.1px;height:18.3px;border:1px solid #c8c8c8;border-radius:3px"></div>
<svg style="left:668.30px;top:79.75px" width="5" height="2.5" viewBox="0 0 5 2.5" fill="none" stroke="#444" stroke-width="1.2"><path d="M0.5 0.5 L2.5 2.0 L4.5 0.5"/></svg>
<svg style="left:584.70px;top:104.55px" width="5" height="2.5" viewBox="0 0 5 2.5" fill="none" stroke="#444" stroke-width="1.2"><path d="M0.5 0.5 L2.5 2.0 L4.5 0.5"/></svg>
<svg style="left:621.5px;top:100.5px" width="6" height="11" viewBox="0 0 6 11"><circle cx="3" cy="3" r="2.6" fill="#333"/><path d="M5.4 3.5 C5.5 6.5 4 9 1.5 10.5" stroke="#333" stroke-width="1.5" fill="none"/></svg>
<div class="a" style="left:634.90px;top:97px;width:1px;height:18px;background:#e0e0e0"></div>
<svg style="left:639px;top:98.5px" width="15" height="15" viewBox="0 0 15 15"><text x="7" y="6.5" font-size="7.5" fill="#555" font-family="Liberation Sans">.0</text><text x="3.5" y="14" font-size="7.5" fill="#555" font-family="Liberation Sans">.00</text>
<path d="M6 3.5 H0.8 M2.8 1.3 L0.8 3.5 L2.8 5.7" fill="none" stroke="#2b7cd3" stroke-width="1"/></svg>
<svg style="left:659px;top:98.5px" width="15" height="15" viewBox="0 0 15 15"><text x="4" y="6.5" font-size="7.5" fill="#555" font-family="Liberation Sans">.00</text><text x="7" y="14" font-size="7.5" fill="#555" font-family="Liberation Sans">.0</text>
<path d="M0.8 11 H6 M4 8.8 L6 11 L4 13.2" fill="none" stroke="#2b7cd3" stroke-width="1"/></svg>
<svg style="left:671.5px;top:129px" width="7" height="7" viewBox="0 0 7 7" fill="none" stroke="#555" stroke-width="0.9"><path d="M0.5 3 V0.5 H6.5 V6.5 H3.5"/><path d="M2 2 L5.5 5.5 M5.5 3 V5.5 H3"/></svg>
<div class="a" style="left:681.00px;top:66px;width:1px;height:69px;background:#e0e0e0"></div>
<div class="t" style="left:21.60px;top:97.11px;font-size:9.80px;color:#262626;transform-origin:0 0;transform:scaleX(0.826);">Paste</div>
<div class="t" style="left:68.00px;top:70.01px;font-size:9.80px;color:#262626;transform-origin:0 0;transform:scaleX(0.911);">Cut</div>
<div class="t" style="left:68.00px;top:90.21px;font-size:9.80px;color:#262626;transform-origin:0 0;transform:scaleX(0.918);">Copy</div>
<div class="t" style="left:68.00px;top:109.81px;font-size:9.80px;color:#262626;transform-origin:0 0;transform:scaleX(0.923);">Format Painter</div>
<div class="t" style="left:50.50px;top:127.71px;font-size:9.20px;color:#444;transform-origin:0 0;transform:scaleX(0.917);">Clipboard</div>
<div class="t" style="left:149.50px;top:75.96px;font-size:9.50px;color:#262626;transform-origin:0 0;transform:scaleX(0.984);">Calibri</div>
<div class="t" style="left:241.20px;top:75.71px;font-size:10.00px;color:#262626;">11</div>
<div class="t" style="left:282.50px;top:74.89px;font-size:12.50px;color:#333;transform-origin:0 0;transform:scaleX(1.139);">A</div>
<div class="t" style="left:303.50px;top:76.63px;font-size:11.00px;color:#333;transform-origin:0 0;transform:scaleX(1.159);">A</div>
<div class="t" style="left:153.60px;top:99.87px;font-size:10.50px;color:#262626;font-weight:bold;transform-origin:0 0;transform:scaleX(0.818);">B</div>
<div class="t" style="left:192.40px;top:99.61px;font-size:10.00px;color:#333;transform-origin:0 0;transform:scaleX(0.983);">U</div>
<div class="t" style="left:290.50px;top:96.64px;font-size:12.00px;color:#333;transform-origin:0 0;transform:scaleX(1.374);">A</div>
<div class="t" style="left:218.00px;top:127.71px;font-size:9.20px;color:#444;transform-origin:0 0;transform:scaleX(0.847);">Font</div>
<div class="t" style="left:459.00px;top:76.11px;font-size:9.80px;color:#262626;transform-origin:0 0;transform:scaleX(0.948);">Wrap Text</div>
<div class="t" style="left:459.00px;top:101.01px;font-size:9.80px;color:#262626;transform-origin:0 0;transform:scaleX(0.951);">Merge &amp; Center</div>
<div class="t" style="left:415.50px;top:127.21px;font-size:9.20px;color:#444;transform-origin:0 0;transform:scaleX(0.887);">Alignment</div>
<div class="t" style="left:565.10px;top:76.26px;font-size:9.50px;color:#262626;transform-origin:0 0;transform:scaleX(0.935);">General</div>
<div class="t" style="left:568.20px;top:99.69px;font-size:12.50px;color:#444;transform-origin:0 0;transform:scaleX(1.021);">$</div>
<div class="t" style="left:598.40px;top:99.94px;font-size:12.00px;color:#444;transform-origin:0 0;transform:scaleX(1.115);">%</div>
<div class="t" style="left:597.90px;top:127.21px;font-size:9.20px;color:#444;transform-origin:0 0;transform:scaleX(0.908);">Number</div>
<svg style="left:705.5px;top:70.5px" width="23" height="19" viewBox="0 0 23 19" fill="none">
<rect x="4.5" y="1" width="10" height="5.3" fill="#f4a3aa"/><rect x="4.5" y="12.5" width="11.5" height="5.5" fill="#f4a3aa"/><rect x="4.5" y="6.8" width="6.8" height="5.2" fill="#8cc1ef"/>
<path d="M4.5 1 H14.5 V6.3 H4.5 Z M4.5 12.5 H16 V18 H4.5 Z" stroke="#e0313b" stroke-width="1"/><path d="M4.5 6.8 H11.3 V12 H4.5" stroke="#2b7cd3" stroke-width="1"/>
<rect x="0.5" y="0.5" width="22" height="18" rx="0.8" stroke="#666" stroke-width="1"/>
<path d="M4.5 0.5 V18.5 M18 0.5 V18.5 M0.5 6.5 H22.5 M0.5 12.3 H22.5" stroke="#666" stroke-width="0.8"/></svg>
<svg style="left:737.90px;top:111.95px" width="5" height="2.5" viewBox="0 0 5 2.5" fill="none" stroke="#444" stroke-width="1.2"><path d="M0.5 0.5 L2.5 2.0 L4.5 0.5"/></svg>
<svg style="left:757.5px;top:70.5px" width="24" height="23" viewBox="0 0 24 23" fill="none">
<rect x="7.5" y="6" width="14.5" height="12" fill="#9cc8f0"/><path d="M7.5 6 H22 V18 H7.5" stroke="#2b7cd3" stroke-width="1"/>
<rect x="0.5" y="0.5" width="21.5" height="18" rx="0.8" stroke="#666" stroke-width="1"/>
<path d="M7.5 0.5 V18.5 M14.8 0.5 V18.5 M0.5 6.3 H22 M0.5 12.3 H22" stroke="#666" stroke-width="0.8"/>
<path d="M10.5 17 L21.5 5.5 L23 7 L12 18.5" fill="#fff" stroke="#444" stroke-width="1"/><path d="M7.5 21.5 C9.5 21.5 9 17.5 11 17 L12.5 18.5 C12 21 10 22.5 7.5 21.5 Z" fill="#2b7cd3"/></svg>
<svg style="left:777.80px;top:111.95px" width="5" height="2.5" viewBox="0 0 5 2.5" fill="none" stroke="#444" stroke-width="1.2"><path d="M0.5 0.5 L2.5 2.0 L4.5 0.5"/></svg>
<div class="a" style="left:793px;top:71.4px;width:187px;height:48.4px;border:1px solid #e3e3e3;border-radius:4px"></div>
<div class="a" style="left:794px;top:73.2px;width:82.7px;height:22.2px;border:1px solid #7a7a7a;background:#fff"></div>
<div class="a" style="left:879.2px;top:75.8px;width:78.2px;height:17px;background:#ffc7ce"></div>
<div class="a" style="left:796.3px;top:98.4px;width:77.8px;height:16.9px;background:#c6efce"></div>
<div class="a" style="left:879.2px;top:98.4px;width:78.2px;height:16.9px;background:#ffeb9c"></div>
<div class="a" style="left:960.6px;top:71.4px;width:19.3px;height:48.4px;border:1px solid #9a9a9a;border-radius:0 4px 4px 0;background:#fff"></div>
<svg style="left:966.5px;top:92px" width="6" height="6" viewBox="0 0 6 6" fill="none" stroke="#444" stroke-width="0.9"><path d="M0.5 0.5 H5.5 M0.5 2.5 L3 5 L5.5 2.5"/></svg>
<div class="a" style="left:987.10px;top:66px;width:1px;height:69px;background:#e0e0e0"></div>
<svg style="left:999px;top:71px" width="25" height="19.5" viewBox="0 0 25 19.5" fill="none">
<rect x="0.5" y="0.5" width="23" height="17.5" rx="1" stroke="#666" stroke-width="1.1"/>
<path d="M7.6 0.5 V18.0 M15.2 0.5 V18.0 M0.5 5.8 H23.5 M0.5 11.6 H23.5" stroke="#888" stroke-width="0.7"/></svg>
<svg style="left:998px;top:73px" width="25" height="14" viewBox="0 0 25 14" fill="none">
<rect x="5" y="4" width="18.5" height="5.5" fill="#8cc1ef" stroke="#2b7cd3" stroke-width="1"/><path d="M0.5 6.8 H10 M4.5 1.5 L0.8 6.8 L4.5 12" stroke="#2b7cd3" stroke-width="1.1"/></svg>
<svg style="left:1007.70px;top:112.05px" width="5" height="2.5" viewBox="0 0 5 2.5" fill="none" stroke="#444" stroke-width="1.2"><path d="M0.5 0.5 L2.5 2.0 L4.5 0.5"/></svg>
<svg style="left:1033px;top:71px" width="25" height="19.5" viewBox="0 0 25 19.5" fill="none">
<rect x="0.5" y="0.5" width="23" height="17.5" rx="1" stroke="#666" stroke-width="1.1"/>
<path d="M7.6 0.5 V18.0 M15.2 0.5 V18.0 M0.5 5.8 H23.5 M0.5 11.6 H23.5" stroke="#888" stroke-width="0.7"/></svg>
<svg style="left:1036px;top:73px" width="22" height="14" viewBox="0 0 22 14" fill="none">
<rect x="2.5" y="4" width="12" height="5.5" fill="#8cc1ef" stroke="#2b7cd3" stroke-width="1"/><path d="M13 1.5 L20.5 11.5 M20.5 1.5 L13 11.5" stroke="#e8343e" stroke-width="1.1"/></svg>
<svg style="left:1041.00px;top:112.05px" width="5" height="2.5" viewBox="0 0 5 2.5" fill="none" stroke="#444" stroke-width="1.2"><path d="M0.5 0.5 L2.5 2.0 L4.5 0.5"/></svg>
<svg style="left:1067px;top:71px" width="25" height="19.5" viewBox="0 0 25 19.5" fill="none">
<rect x="0.5" y="0.5" width="23" height="17.5" rx="1" stroke="#666" stroke-width="1.1"/>
<path d="M7.6 0.5 V18.0 M15.2 0.5 V18.0 M0.5 5.8 H23.5 M0.5 11.6 H23.5" stroke="#888" stroke-width="0.7"/></svg>
<svg style="left:1067px;top:67px" width="25" height="20" viewBox="0 0 25 20" fill="none">
<rect x="6" y="10" width="11.5" height="5.5" fill="#8cc1ef" stroke="#2b7cd3" stroke-width="1"/><path d="M6 2 H18 M6 0.5 V3.5 M18 0.5 V3.5" stroke="#2b7cd3" stroke-width="1"/></svg>
<svg style="left:1075.10px;top:110.75px" width="5" height="2.5" viewBox="0 0 5 2.5" fill="none" stroke="#444" stroke-width="1.2"><path d="M0.5 0.5 L2.5 2.0 L4.5 0.5"/></svg>
<div class="a" style="left:1100.00px;top:66px;width:1px;height:69px;background:#e0e0e0"></div>
<svg style="left:1111px;top:68.8px" width="11" height="12" viewBox="0 0 11 12" fill="none" stroke="#444" stroke-width="1.1"><path d="M10 1 H1 L5.5 6 L1 11 H10"/></svg>
<svg style="left:1177.40px;top:73.25px" width="5" height="2.5" viewBox="0 0 5 2.5" fill="none" stroke="#444" stroke-width="1.2"><path d="M0.5 0.5 L2.5 2.0 L4.5 0.5"/></svg>
<svg style="left:1110px;top:89px" width="13" height="11" viewBox="0 0 13 11" fill="none"><rect x="0.5" y="0.5" width="12" height="10" stroke="#666" stroke-width="1"/><path d="M0.5 1.5 H12.5" stroke="#666" stroke-width="1.5"/><path d="M6.5 3 V8.5 M4 6 L6.5 8.5 L9 6" stroke="#2b7cd3" stroke-width="1.1"/></svg>
<svg style="left:1140.10px;top:93.15px" width="5" height="2.5" viewBox="0 0 5 2.5" fill="none" stroke="#444" stroke-width="1.2"><path d="M0.5 0.5 L2.5 2.0 L4.5 0.5"/></svg>
<svg style="left:1110px;top:108.5px" width="12" height="12" viewBox="0 0 12 12" fill="none" stroke="#b146c2" stroke-width="1.1"><path d="M0.8 7 L6.5 1 L11.2 5.5 L5 11.5 Z"/><path d="M2.5 5 L7.5 9.8" /><path d="M0.8 7 L5 11.5 L7.5 9 L2.8 4.8 Z" fill="#dca6e6"/></svg>
<svg style="left:1149.70px;top:113.55px" width="5" height="2.5" viewBox="0 0 5 2.5" fill="none" stroke="#444" stroke-width="1.2"><path d="M0.5 0.5 L2.5 2.0 L4.5 0.5"/></svg>
<svg style="left:1195px;top:69px" width="24" height="22" viewBox="0 0 24 22" fill="none">
<path d="M0.8 9.5 L4.5 0.8 L8.2 9.5 M2 6.5 H7" stroke="#2b7cd3" stroke-width="1.1"/>
<path d="M1.3 11.8 H8 L1.3 20.8 H8.3" stroke="#444" stroke-width="1.1"/>
<path d="M10.5 5.5 H22.5 L18 11 V17.5 H15 V11 Z" stroke="#444" stroke-width="1.1"/></svg>
<svg style="left:1215.60px;top:111.65px" width="5" height="2.5" viewBox="0 0 5 2.5" fill="none" stroke="#444" stroke-width="1.2"><path d="M0.5 0.5 L2.5 2.0 L4.5 0.5"/></svg>
<svg style="left:1230px;top:68px" width="25" height="24" viewBox="0 0 25 24" fill="none" stroke="#444" stroke-width="1.1"><circle cx="15" cy="9.3" r="8.3"/><path d="M9 15.5 L1.2 23.3"/></svg>
<svg style="left:1253.90px;top:111.65px" width="5" height="2.5" viewBox="0 0 5 2.5" fill="none" stroke="#444" stroke-width="1.2"><path d="M0.5 0.5 L2.5 2.0 L4.5 0.5"/></svg>
<div class="a" style="left:1267.10px;top:66px;width:1px;height:69px;background:#e0e0e0"></div>
<svg style="left:1280px;top:68.8px" width="23" height="23" viewBox="0 0 23 23" fill="none" stroke="#d35230" stroke-width="1.1">
<rect x="0.6" y="0.6" width="21.3" height="21.3"/><rect x="3" y="2.8" width="7.5" height="7.3" rx="0.5"/><rect x="12" y="2.8" width="7.7" height="7.3" rx="0.5"/>
<rect x="3" y="12.2" width="7.5" height="7.4" rx="0.5"/><rect x="12" y="12.2" width="7.7" height="7.4" rx="0.5"/></svg>
<div class="a" style="left:1315.00px;top:66px;width:1px;height:69px;background:#e0e0e0"></div>
<svg style="left:1328px;top:68.8px" width="23" height="23" viewBox="0 0 23 23" fill="none">
<rect x="0.6" y="0.6" width="21.5" height="21.5" stroke="#555" stroke-width="1"/><path d="M0.6 3.5 H22 M0.6 17 H22 M6 17 V22 M12 17 V22 M17 17 V22" stroke="#999" stroke-width="0.7"/>
<circle cx="10.6" cy="9.8" r="7" fill="#fff" stroke="#444" stroke-width="1.1"/><path d="M15.5 14.8 L22 21.5" stroke="#444" stroke-width="1.2"/>
<rect x="7.5" y="8.5" width="1.6" height="4" fill="#777"/><rect x="9.8" y="6" width="1.6" height="6.5" fill="#777"/><rect x="12" y="7" width="1.8" height="5.5" fill="#2b7cd3"/></svg>
<svg style="left:1360px;top:66px" width="30" height="28" viewBox="0 0 30 28">
<defs><linearGradient id="cpa" x1="0" y1="0" x2="0" y2="1"><stop offset="0" stop-color="#12a2f2"/><stop offset="0.55" stop-color="#3aa85a"/><stop offset="1" stop-color="#f2c20c"/></linearGradient>
<linearGradient id="cpb" x1="0" y1="0" x2="0" y2="1"><stop offset="0" stop-color="#b44ee0"/><stop offset="0.55" stop-color="#ef5a8c"/><stop offset="1" stop-color="#fb9a4a"/></linearGradient></defs>
<path d="M15 3.2 H18.5 C20.5 3.2 21.8 4.8 22.5 9.5 H17 Z" fill="#1745c8"/>
<path d="M9.5 18 H14.8 L14.5 24 H13 C11.2 24 10.3 22.5 9.5 18 Z" fill="#e5432c"/>
<polygon points="9.3,4.6 16.4,4.6 11.4,17 5.4,17" fill="url(#cpa)" stroke="url(#cpa)" stroke-width="3" stroke-linejoin="round"/>
<polygon points="20.8,10.9 25.7,10.9 21.6,22.5 15.4,22.5" fill="url(#cpb)" stroke="url(#cpb)" stroke-width="3" stroke-linejoin="round"/>
</svg>
<div class="a" style="left:1398.00px;top:66px;width:1px;height:69px;background:#e0e0e0"></div>
<svg style="left:1421px;top:70px" width="21" height="23" viewBox="0 0 21 23" fill="none" stroke="#3d6fe0" stroke-width="1.1">
<path d="M1 1 H10.5 L15 5.5 V12 M9 21 H2.5 C1.5 21 1 20.5 1 19.5 V2.5 C1 1.5 1.5 1 2.5 1"/><path d="M4 12 C6 9.5 7 7 7.5 4 C8.5 7 10 9.5 12.5 10.5"/>
<path d="M13 14 L16 11 C17 10 18.5 10 19.5 11 C20.5 12 20.5 13.5 19.5 14.5 L17 17 M15 16.5 L12 19.5 C11 20.5 9.5 20.5 8.5 19.5 C7.5 18.5 7.5 17 8.5 16 L11 13.5 M12 17.5 L16 13.5"/></svg>
<div class="a" style="left:1458.90px;top:66px;width:1px;height:69px;background:#e0e0e0"></div>
<svg style="left:1469px;top:72px" width="25" height="16" viewBox="0 0 25 16">
<defs><linearGradient id="sva" x1="0" y1="0" x2="1" y2="0"><stop offset="0" stop-color="#3d92d8"/><stop offset="1" stop-color="#a9d5f4"/></linearGradient></defs>
<path d="M3 0.6 L24.2 2 L22.5 12 L4 12.5 Z" fill="url(#sva)"/><path d="M1 4.4 L12 4.8 L12.5 13.5 L2.3 14.4 Z" fill="#2f86d0"/>
<circle cx="14.6" cy="7.3" r="4" fill="#fff36b" stroke="#9c8a10" stroke-width="0.6"/><path d="M13.9 7.5 L14.6 10 L15.3 7.5" stroke="#8a7a20" stroke-width="0.5" fill="none"/><rect x="13.2" y="11" width="2.8" height="3.6" rx="1" fill="#333"/></svg>
<div class="a" style="left:1503.25px;top:66px;width:1px;height:69px;background:#e0e0e0"></div>
<svg style="left:1578.00px;top:126.75px" width="9" height="4.5" viewBox="0 0 9 4.5" fill="none" stroke="#444" stroke-width="1.1"><path d="M0.5 0.5 L4.5 4.0 L8.5 0.5"/></svg>
<div class="t" style="left:692.30px;top:95.91px;font-size:9.80px;color:#262626;transform-origin:0 0;transform:scaleX(0.981);">Conditional</div>
<div class="t" style="left:689.20px;top:108.21px;font-size:9.80px;color:#262626;transform-origin:0 0;transform:scaleX(0.969);">Formatting</div>
<div class="t" style="left:748.20px;top:95.91px;font-size:9.80px;color:#262626;transform-origin:0 0;transform:scaleX(0.925);">Format as</div>
<div class="t" style="left:753.50px;top:108.21px;font-size:9.80px;color:#262626;transform-origin:0 0;transform:scaleX(0.918);">Table</div>
<div class="t" style="left:799.70px;top:79.12px;font-size:10.60px;color:#1a1a1a;">Normal</div>
<div class="t" style="left:883.00px;top:79.12px;font-size:10.60px;color:#9c0006;transform-origin:0 0;transform:scaleX(0.885);">Bad</div>
<div class="t" style="left:799.70px;top:101.82px;font-size:10.60px;color:#006100;transform-origin:0 0;transform:scaleX(0.941);">Good</div>
<div class="t" style="left:883.00px;top:101.82px;font-size:10.60px;color:#9c5700;transform-origin:0 0;transform:scaleX(0.977);">Neutral</div>
<div class="t" style="left:824.40px;top:128.21px;font-size:9.20px;color:#444;transform-origin:0 0;transform:scaleX(0.814);">Styles</div>
<div class="t" style="left:998.90px;top:96.71px;font-size:9.80px;color:#262626;transform-origin:0 0;transform:scaleX(0.910);">Insert</div>
<div class="t" style="left:1030.40px;top:96.71px;font-size:9.80px;color:#262626;transform-origin:0 0;transform:scaleX(0.974);">Delete</div>
<div class="t" style="left:1063.20px;top:95.41px;font-size:9.80px;color:#262626;transform-origin:0 0;transform:scaleX(0.928);">Format</div>
<div class="t" style="left:1035.60px;top:128.21px;font-size:9.20px;color:#444;transform-origin:0 0;transform:scaleX(0.812);">Cells</div>
<div class="t" style="left:1125.70px;top:69.91px;font-size:9.80px;color:#262626;transform-origin:0 0;transform:scaleX(0.933);">AutoSum</div>
<div class="t" style="left:1125.70px;top:89.61px;font-size:9.80px;color:#262626;transform-origin:0 0;transform:scaleX(0.919);">Fill</div>
<div class="t" style="left:1125.70px;top:110.01px;font-size:9.80px;color:#262626;transform-origin:0 0;transform:scaleX(0.897);">Clear</div>
<div class="t" style="left:1193.00px;top:95.71px;font-size:9.80px;color:#262626;transform-origin:0 0;transform:scaleX(0.958);">Sort &amp;</div>
<div class="t" style="left:1191.40px;top:108.11px;font-size:9.80px;color:#262626;transform-origin:0 0;transform:scaleX(1.052);">Filter</div>
<div class="t" style="left:1228.00px;top:95.71px;font-size:9.80px;color:#262626;transform-origin:0 0;transform:scaleX(0.982);">Find &amp;</div>
<div class="t" style="left:1225.50px;top:108.11px;font-size:9.80px;color:#262626;transform-origin:0 0;transform:scaleX(0.936);">Select</div>
<div class="t" style="left:1171.30px;top:128.21px;font-size:9.20px;color:#444;transform-origin:0 0;transform:scaleX(0.885);">Editing</div>
<div class="t" style="left:1274.90px;top:95.71px;font-size:9.80px;color:#262626;transform-origin:0 0;transform:scaleX(0.987);">Add-ins</div>
<div class="t" style="left:1276.50px;top:128.21px;font-size:9.20px;color:#444;transform-origin:0 0;transform:scaleX(0.920);">Add-ins</div>
<div class="t" style="left:1322.70px;top:95.71px;font-size:9.80px;color:#262626;transform-origin:0 0;transform:scaleX(0.941);">Analyze</div>
<div class="t" style="left:1329.10px;top:108.11px;font-size:9.80px;color:#262626;transform-origin:0 0;transform:scaleX(0.952);">Data</div>
<div class="t" style="left:1359.70px;top:95.71px;font-size:9.80px;color:#262626;">Copilot</div>
<div class="t" style="left:1414.50px;top:96.11px;font-size:9.80px;color:#262626;transform-origin:0 0;transform:scaleX(0.921);">Create</div>
<div class="t" style="left:1416.70px;top:107.96px;font-size:9.80px;color:#262626;transform-origin:0 0;transform:scaleX(0.839);">a PDF</div>
<div class="t" style="left:1400.80px;top:128.26px;font-size:9.20px;color:#444;transform-origin:0 0;transform:scaleX(0.915);">Adobe Acrobat</div>
<div class="t" style="left:1468.70px;top:96.11px;font-size:9.80px;color:#262626;transform-origin:0 0;transform:scaleX(0.918);">Solver</div>
<div class="t" style="left:1470.00px;top:128.26px;font-size:9.20px;color:#444;transform-origin:0 0;transform:scaleX(0.855);">Solver</div>
</div>
<div class="a" style="left:6.5px;top:146.4px;width:78.5px;height:18.2px;border:1px solid #dcdcdc;border-radius:4px;background:#fff"></div>
<svg style="left:72.90px;top:153.80px" width="8" height="4.0" viewBox="0 0 8 4.0" fill="none" stroke="#333" stroke-width="1.1"><path d="M0.5 0.5 L4.0 3.5 L7.5 0.5"/></svg>
<div class="a" style="left:92.2px;top:150.5px;width:1.8px;height:1.8px;border-radius:1px;background:#333"></div>
<div class="a" style="left:92.2px;top:154.5px;width:1.8px;height:1.8px;border-radius:1px;background:#333"></div>
<div class="a" style="left:92.2px;top:158.5px;width:1.8px;height:1.8px;border-radius:1px;background:#333"></div>
<div class="a" style="left:101.9px;top:146.4px;width:65.3px;height:18.2px;border:1px solid #dcdcdc;border-radius:4px;background:#fff"></div>
<svg style="left:106px;top:151px" width="10" height="10" viewBox="0 0 10 10" fill="none" stroke="#a8a8a8" stroke-width="0.9"><path d="M0.5 0.5 L9.3 9.3 M9.3 0.5 L0.5 9.3"/></svg>
<svg style="left:123.5px;top:151px" width="12" height="9" viewBox="0 0 12 9" fill="none" stroke="#a8a8a8" stroke-width="0.9"><path d="M0.5 4.5 L4 8 L11.5 0.5"/></svg>
<div class="t" style="left:142.5px;top:149.64px;font-size:12.5px;color:#333;font-family:'Liberation Serif',serif;font-style:italic">fx</div>
<svg style="left:159.50px;top:154.30px" width="6" height="3.0" viewBox="0 0 6 3.0" fill="none" stroke="#555" stroke-width="0.9"><path d="M0.5 0.5 L3.0 2.5 L5.5 0.5"/></svg>
<div class="a" style="left:171.6px;top:146.4px;width:1421.4px;height:18.2px;border:1px solid #e2e2e2;border-radius:4px;background:#fff"></div>
<svg style="left:1582.00px;top:152.75px" width="9" height="4.5" viewBox="0 0 9 4.5" fill="none" stroke="#333" stroke-width="1.1"><path d="M0.5 0.5 L4.5 4.0 L8.5 0.5"/></svg>
<div class="a" style="left:1584.5px;top:169.5px;width:15.5px;height:651px;background:#f3f3f3"></div>
<svg style="left:1588.5px;top:173.8px" width="8" height="5" viewBox="0 0 8 5"><path d="M0 5 L4 0 L8 5 Z" fill="#666"/></svg>
<div class="a" style="left:1589px;top:183px;width:6.7px;height:14.3px;border-radius:3.3px;background:#6a6a6a"></div>
<svg style="left:1588.5px;top:812.9px" width="8" height="5" viewBox="0 0 8 5"><path d="M0 0 L8 0 L4 5 Z" fill="#666"/></svg>
<div class="a" style="left:0;top:820.6px;width:1600px;height:24.4px;background:#efefef"></div>
<svg style="left:19.5px;top:829.5px" width="6" height="9" viewBox="0 0 6 9" fill="none" stroke="#999" stroke-width="1"><path d="M5 0.5 L1 4.5 L5 8.5"/></svg>
<svg style="left:44.5px;top:829.5px" width="6" height="9" viewBox="0 0 6 9" fill="none" stroke="#333" stroke-width="1"><path d="M1 0.5 L5 4.5 L1 8.5"/></svg>
<div class="a" style="left:88.1px;top:824px;width:39.65px;height:18.25px;border-radius:3px;background:#ffffff"></div>
<div class="a" style="left:135px;top:824px;width:49.40px;height:18.25px;border-radius:3px;background:#fcfcc8"></div>
<div class="a" style="left:191.6px;top:824px;width:90.00px;height:18.25px;border-radius:3px;background:#fcfcc8"></div>
<div class="a" style="left:288.4px;top:824px;width:121.30px;height:18.25px;border-radius:3px;background:#fcfcc8"></div>
<div class="a" style="left:416.9px;top:824px;width:77.10px;height:18.25px;border-radius:3px;background:#fcfcc8"></div>
<div class="a" style="left:501.25px;top:824px;width:68.75px;height:18.25px;border-radius:3px;background:#fcfcc8"></div>
<div class="a" style="left:576.9px;top:824px;width:87.50px;height:18.25px;border-radius:3px;background:#fcfcc8"></div>
<div class="a" style="left:671.6px;top:824px;width:75.90px;height:18.25px;border-radius:3px;background:#7030a0"></div>
<div class="a" style="left:754.4px;top:824px;width:109.35px;height:18.25px;border-radius:3px;background:#7030a0"></div>
<div class="a" style="left:870.3px;top:824px;width:47.20px;height:18.25px;border-radius:3px;background:#7030a0"></div>
<div class="a" style="left:924px;top:824px;width:116.60px;height:18.25px;border-radius:3px;background:#7030a0"></div>
<div class="a" style="left:1047.5px;top:824px;width:109.40px;height:18.25px;border-radius:3px;background:#7030a0"></div>
<div class="a" style="left:130.75px;top:826.5px;width:1px;height:14px;background:#d8d8d8"></div>
<div class="a" style="left:187.4px;top:826.5px;width:1px;height:14px;background:#d8d8d8"></div>
<div class="a" style="left:284.2px;top:826.5px;width:1px;height:14px;background:#d8d8d8"></div>
<div class="a" style="left:413.25px;top:826.5px;width:1px;height:14px;background:#d8d8d8"></div>
<div class="a" style="left:497.3px;top:826.5px;width:1px;height:14px;background:#d8d8d8"></div>
<div class="a" style="left:572.5px;top:826.5px;width:1px;height:14px;background:#d8d8d8"></div>
<div class="a" style="left:667.0px;top:826.5px;width:1px;height:14px;background:#d8d8d8"></div>
<div class="a" style="left:750.1px;top:826.5px;width:1px;height:14px;background:#d8d8d8"></div>
<div class="a" style="left:866.4px;top:826.5px;width:1px;height:14px;background:#d8d8d8"></div>
<div class="a" style="left:920.4px;top:826.5px;width:1px;height:14px;background:#d8d8d8"></div>
<div class="a" style="left:1043.25px;top:826.5px;width:1px;height:14px;background:#d8d8d8"></div>
<div class="a" style="left:1203.3px;top:826.5px;width:1px;height:14px;background:#d8d8d8"></div>
<div class="a" style="left:1270.3px;top:826.5px;width:1px;height:14px;background:#d8d8d8"></div>
<div class="a" style="left:1325.8px;top:826.5px;width:1px;height:14px;background:#d8d8d8"></div>
<div class="a" style="left:1383.3px;top:826.5px;width:1px;height:14px;background:#d8d8d8"></div>
<div class="a" style="left:1164.4px;top:822.2px;width:35.4px;height:19.3px;border-radius:4px;background:linear-gradient(#fde4e4,#f8a8a8);box-shadow:0 0.5px 1px rgba(0,0,0,0.15)"></div>
<div class="a" style="left:1170px;top:838.6px;width:24px;height:1.8px;background:#2f7a47"></div>
<div class="a" style="left:1398.4px;top:831.8px;width:2.2px;height:2.2px;border-radius:1.1px;background:#222"></div>
<div class="a" style="left:1402.0px;top:831.8px;width:2.2px;height:2.2px;border-radius:1.1px;background:#222"></div>
<div class="a" style="left:1405.6000000000001px;top:831.8px;width:2.2px;height:2.2px;border-radius:1.1px;background:#222"></div>
<div class="a" style="left:1423.5px;top:832.5px;width:9px;height:1.1px;background:#333"></div>
<div class="a" style="left:1427.5px;top:828.5px;width:1.1px;height:9px;background:#333"></div>
<div class="a" style="left:1452.3px;top:828.4px;width:2.2px;height:2.2px;border-radius:1.1px;background:#222"></div>
<div class="a" style="left:1452.3px;top:831.9px;width:2.2px;height:2.2px;border-radius:1.1px;background:#222"></div>
<div class="a" style="left:1452.3px;top:835.4px;width:2.2px;height:2.2px;border-radius:1.1px;background:#222"></div>
<svg style="left:1470px;top:829.5px" width="6" height="7" viewBox="0 0 6 7"><path d="M6 0 L0 3.5 L6 7 Z" fill="#666"/></svg>
<div class="a" style="left:1479.3px;top:830px;width:90.5px;height:6.6px;border-radius:3.3px;background:#6a6a6a"></div>
<svg style="left:1574.5px;top:829.5px" width="6" height="7" viewBox="0 0 6 7"><path d="M0 0 L6 3.5 L0 7 Z" fill="#666"/></svg>
<div class="a" style="left:0;top:845px;width:1600px;height:17.3px;background:#f3f3f3"></div>
<svg style="left:92px;top:849.3px" width="12" height="11" viewBox="0 0 12 11" fill="none" stroke="#555" stroke-width="0.9"><path d="M0.5 10.5 V0.5 H11.5 V4"/><path d="M0.5 2 H11.5"/><circle cx="8" cy="7.5" r="3"/><circle cx="8" cy="7.5" r="1.2" fill="#555"/></svg>
<svg style="left:117px;top:848.5px" width="12" height="12" viewBox="0 0 12 12" fill="none" stroke="#555" stroke-width="0.9"><circle cx="5" cy="1.8" r="1.3"/><path d="M0.5 3.5 H9.5 M5 3.5 V7 L2 11.5 M5 7 L7 9"/><path d="M8 8 L11.5 11.5 M11.5 8 L8 11.5"/></svg>
<div class="a" style="left:1367.7px;top:846px;width:31.1px;height:16.4px;background:#e0e0e0"></div>
<svg style="left:1377px;top:849.5px" width="11" height="10" viewBox="0 0 11 10" fill="none" stroke="#444" stroke-width="0.9"><rect x="0.5" y="0.5" width="10" height="9"/><path d="M3.8 0.5 V9.5 M7.2 0.5 V9.5 M0.5 3.5 H10.5 M0.5 6.5 H10.5"/></svg>
<svg style="left:1408.5px;top:849.5px" width="11" height="10" viewBox="0 0 11 10" fill="none" stroke="#444" stroke-width="0.9"><rect x="0.5" y="0.5" width="10" height="9"/><rect x="2.5" y="1.5" width="6" height="7"/><path d="M3.5 3.5 H7.5 M3.5 5 H7.5 M3.5 6.5 H7.5" stroke-width="0.6"/></svg>
<svg style="left:1440px;top:849.5px" width="11" height="10" viewBox="0 0 11 10" fill="none" stroke="#444" stroke-width="0.9"><path d="M0.5 9.5 V0.5 H10.5 V9.5 Z M6.5 0.5 V4.5 H0.5"/></svg>
<div class="a" style="left:1465.3px;top:854.3px;width:6px;height:1px;background:#555"></div>
<div class="a" style="left:1475px;top:854.5px;width:79px;height:1px;background:#999"></div>
<div class="a" style="left:1509.5px;top:850px;width:3px;height:9.5px;background:#555"></div>
<div class="a" style="left:1514px;top:851.5px;width:1px;height:6px;background:#777"></div>
<div class="a" style="left:1557.4px;top:854.3px;width:6px;height:1px;background:#555"></div>
<div class="a" style="left:1559.9px;top:851.8px;width:1px;height:6px;background:#555"></div>
<div class="a" style="left:0;top:862.3px;width:1600px;height:37.7px;background:#cfe4f3;border-top:1px solid #d9e0e6"></div>
<svg style="left:15px;top:866px" width="20" height="24" viewBox="0 0 20 24">
<path d="M2 10 L6 8 L5.5 12 Z" fill="#7fb2ef"/><path d="M11 12 V19" stroke="#1a73e8" stroke-width="2.2"/><circle cx="11" cy="20" r="2.4" fill="#1a73e8"/></svg>
<div class="a" style="left:23.25px;top:869.25px;width:9px;height:9px;border-radius:5px;background:#c42b1c;box-shadow:0 0 0 1px #cee2f1"></div>
<svg style="left:565.2px;top:872.5px" width="19" height="19" viewBox="0 0 19 19">
<defs><linearGradient id="wg" x1="0" y1="0" x2="1" y2="1"><stop offset="0" stop-color="#2fb8f2"/><stop offset="1" stop-color="#0a6cd3"/></linearGradient></defs>
<rect x="0" y="0" width="8.9" height="8.9" rx="0.6" fill="url(#wg)"/><rect x="9.8" y="0" width="8.9" height="8.9" rx="0.6" fill="url(#wg)"/>
<rect x="0" y="9.8" width="8.9" height="8.9" rx="0.6" fill="url(#wg)"/><rect x="9.8" y="9.8" width="8.9" height="8.9" rx="0.6" fill="url(#wg)"/></svg>
<div class="a" style="left:595px;top:869.7px;width:170px;height:23.8px;border-radius:12px;background:#eaf2f9;border:1px solid #d6e3ee"></div>
<svg style="left:603px;top:875.5px" width="13" height="13" viewBox="0 0 13 13" fill="none" stroke="#222" stroke-width="1.3"><circle cx="5.3" cy="5.3" r="4.3"/><path d="M8.5 8.5 L12.3 12.3"/></svg>
<svg style="left:726px;top:871px" width="36" height="22" viewBox="0 0 36 22">
<ellipse cx="18" cy="19" rx="17" ry="3" fill="#6fb03a"/><ellipse cx="19" cy="11" rx="12" ry="7" fill="#9b8a8a"/><ellipse cx="7" cy="10" rx="6" ry="5" fill="#a89494"/>
<rect x="11" y="14" width="2.5" height="6" fill="#7d6c6c"/><rect x="25" y="14" width="2.5" height="6" fill="#7d6c6c"/></svg>
<svg style="left:775px;top:872.5px" width="19" height="19" viewBox="0 0 19 19"><rect x="6" y="1" width="12" height="11" rx="1" fill="#f4f4f4" stroke="#bbb" stroke-width="0.8"/><rect x="1" y="6" width="11" height="12" rx="1" fill="#2b2b2b"/></svg>
<svg style="left:809.5px;top:872.5px" width="20" height="19" viewBox="0 0 20 19">
<path d="M0.5 3 C0.5 2 1 1.5 2 1.5 H7 L9 3.5 H18 C19 3.5 19.5 4 19.5 5 V17 C19.5 18 19 18.5 18 18.5 H2 C1 18.5 0.5 18 0.5 17 Z" fill="#f7c53d"/>
<rect x="0.5" y="6" width="19" height="12.5" rx="1" fill="#ffd65c"/><rect x="6" y="13.5" width="8" height="3" rx="0.8" fill="#1e6fd9"/></svg>
<svg style="left:844.5px;top:872.5px" width="19" height="19" viewBox="0 0 19 19"><ellipse cx="9.5" cy="9.5" rx="9" ry="9.3" fill="#e21b2e"/><ellipse cx="9.5" cy="9.5" rx="4" ry="6.8" fill="#cee2f1"/></svg>
<svg style="left:877.5px;top:869px" width="24" height="23" viewBox="0 0 24 23">
<circle cx="9.7" cy="13" r="9.5" fill="#e33b2e"/><path d="M9.7 13 L1.5 8.3 A9.5 9.5 0 0 0 9.7 22.5 Z" fill="#2da94f"/><path d="M9.7 13 L9.7 22.5 A9.5 9.5 0 0 0 17.9 8.3 Z" fill="#fbc116"/>
<circle cx="9.7" cy="13" r="4.3" fill="#fff"/><circle cx="9.7" cy="13" r="3.3" fill="#1a73e8"/><circle cx="17" cy="5.5" r="5" fill="#9aa0a6" stroke="#cee2f1" stroke-width="1"/><rect x="14" y="5" width="6" height="1.2" fill="#fff"/></svg>
<svg style="left:913.5px;top:872.5px" width="19" height="19" viewBox="0 0 19 19" fill="none">
<path d="M1 1 H11 V6 M1 1 V11 H6" stroke="#d93025" stroke-width="1.3" stroke-dasharray="2 1.2"/><path d="M7 7 L12 14 M12 7 L7 14" stroke="#555" stroke-width="1.2"/><circle cx="15" cy="14.5" r="2.3" stroke="#1a73e8" stroke-width="1.2"/><circle cx="7.5" cy="16" r="2" stroke="#1a73e8" stroke-width="1.2"/></svg>
<div class="a" style="left:946.7px;top:872.5px;width:19.6px;height:19.6px;border-radius:10px;background:#111"></div>
<svg style="left:982.8px;top:871.5px" width="17" height="21" viewBox="0 0 17 21">
<rect x="1" y="2" width="15" height="18" rx="1.2" fill="#5cb6f2"/><rect x="1" y="16" width="15" height="4" rx="1" fill="#e9a55a"/><path d="M3 2 V0.5 M6 2 V0.5 M9 2 V0.5 M12 2 V0.5" stroke="#333" stroke-width="0.9"/>
<path d="M4 6 H13 M4 8.5 H13 M4 11 H13 M4 13.5 H11" stroke="#124b7a" stroke-width="0.9"/></svg>
<svg style="left:1016px;top:872.5px" width="19" height="19" viewBox="0 0 19 19">
<rect x="5" y="0.5" width="13.5" height="18" rx="1.2" fill="#21a366"/><rect x="5" y="0.5" width="13.5" height="6" rx="1.2" fill="#33c481"/><rect x="5" y="12.5" width="13.5" height="6" rx="1.2" fill="#107c41"/>
<rect x="0.5" y="4.5" width="10" height="10" rx="1" fill="#107c41"/><path d="M3 7 L8 12 M8 7 L3 12" stroke="#fff" stroke-width="1.4"/></svg>
<div class="a" style="left:850.8px;top:893.8px;width:5px;height:2.3px;border-radius:1.2px;background:#7a8794"></div>
<div class="a" style="left:885.1px;top:893.8px;width:5px;height:2.3px;border-radius:1.2px;background:#7a8794"></div>
<div class="a" style="left:954.0px;top:893.8px;width:5px;height:2.3px;border-radius:1.2px;background:#7a8794"></div>
<div class="a" style="left:988.3px;top:893.8px;width:5px;height:2.3px;border-radius:1.2px;background:#7a8794"></div>
<div class="a" style="left:1023.0px;top:893.8px;width:5px;height:2.3px;border-radius:1.2px;background:#7a8794"></div>
<svg style="left:1478.5px;top:878.5px" width="9" height="5" viewBox="0 0 9 5" fill="none" stroke="#222" stroke-width="1.1"><path d="M0.5 4.5 L4.5 0.5 L8.5 4.5"/></svg>
<svg style="left:1501.5px;top:874.5px" width="14" height="14" viewBox="0 0 14 14" fill="none" stroke="#333" stroke-width="0.9">
<path d="M8 9.5 H0.5 V1.5 H8"/><path d="M4 9.5 V12.5 M2 12.5 H8.5"/><circle cx="11" cy="2.8" r="2.3"/><path d="M11 5 V11 M9.5 11 H12.5 V13 H9.5 Z"/></svg>
<svg style="left:1520.5px;top:875.5px" width="13" height="12" viewBox="0 0 13 12" fill="none" stroke="#333" stroke-width="0.9">
<path d="M0.5 4 H3 L6.5 0.8 V11.2 L3 8 H0.5 Z"/><path d="M8.5 3.5 C9.7 4.8 9.7 7.2 8.5 8.5" stroke="#666"/><path d="M10.3 2 C12.3 4 12.3 8 10.3 10" stroke="#aaa"/></svg>
<div class="t" style="left:10.60px;top:150.62px;font-size:10.50px;color:#262626;transform-origin:0 0;transform:scaleX(0.872);">S21</div>
<div class="t" style="left:95.60px;top:827.98px;font-size:11.30px;color:#1a1a1a;transform-origin:0 0;transform:scaleX(0.919);">Index</div>
<div class="t" style="left:141.90px;top:827.98px;font-size:11.30px;color:#1a1a1a;transform-origin:0 0;transform:scaleX(0.977);">Control</div>
<div class="t" style="left:199.40px;top:827.98px;font-size:11.30px;color:#1a1a1a;transform-origin:0 0;transform:scaleX(0.963);">Capacity Matrix</div>
<div class="t" style="left:295.60px;top:827.98px;font-size:11.30px;color:#1a1a1a;transform-origin:0 0;transform:scaleX(0.945);">Revenue Assumptions</div>
<div class="t" style="left:423.75px;top:827.98px;font-size:11.30px;color:#1a1a1a;transform-origin:0 0;transform:scaleX(0.919);">Labor&amp;COGS</div>
<div class="t" style="left:508.75px;top:827.98px;font-size:11.30px;color:#1a1a1a;transform-origin:0 0;transform:scaleX(0.906);">Fixed Costs</div>
<div class="t" style="left:583.75px;top:827.98px;font-size:11.30px;color:#1a1a1a;transform-origin:0 0;transform:scaleX(0.958);">Startup&amp;Capex</div>
<div class="t" style="left:678.75px;top:827.98px;font-size:11.30px;color:#ffffff;transform-origin:0 0;transform:scaleX(0.990);">Distributions</div>
<div class="t" style="left:762.50px;top:827.98px;font-size:11.30px;color:#ffffff;transform-origin:0 0;transform:scaleX(0.933);">Executive Summary</div>
<div class="t" style="left:877.80px;top:827.98px;font-size:11.30px;color:#ffffff;transform-origin:0 0;transform:scaleX(0.905);">Visuals</div>
<div class="t" style="left:931.90px;top:827.98px;font-size:11.30px;color:#ffffff;transform-origin:0 0;transform:scaleX(0.989);">P&amp;L Detail - Monthly</div>
<div class="t" style="left:1054.40px;top:827.98px;font-size:11.30px;color:#ffffff;transform-origin:0 0;transform:scaleX(0.977);">P&amp;L Detail - Annual</div>
<div class="t" style="left:1170.20px;top:825.28px;font-size:11.30px;color:#1a1a1a;font-weight:bold;transform-origin:0 0;transform:scaleX(0.948);">Debt</div>
<div class="t" style="left:1215.30px;top:828.18px;font-size:11.30px;color:#262626;transform-origin:0 0;transform:scaleX(0.979);">Inventory</div>
<div class="t" style="left:1280.30px;top:828.18px;font-size:11.30px;color:#262626;transform-origin:0 0;transform:scaleX(0.964);">matrix1</div>
<div class="t" style="left:1337.00px;top:828.18px;font-size:11.30px;color:#262626;transform-origin:0 0;transform:scaleX(0.953);">matrix2</div>
<div class="t" style="left:8.75px;top:850.89px;font-size:7.90px;color:#333;transform-origin:0 0;transform:scaleX(0.974);">Ready</div>
<div class="t" style="left:43.75px;top:850.89px;font-size:7.90px;color:#333;transform-origin:0 0;transform:scaleX(0.976);">Calculate</div>
<div class="t" style="left:131.00px;top:850.89px;font-size:7.90px;color:#262626;font-weight:bold;">Accessibility: Investigate</div>
<div class="t" style="left:1573.60px;top:850.55px;font-size:8.50px;color:#333;transform-origin:0 0;transform:scaleX(0.911);">90%</div>
<div class="t" style="left:25.60px;top:870.09px;font-size:7.50px;color:#fff;transform-origin:0 0;transform:scaleX(1.031);">2</div>
<div class="t" style="left:40.30px;top:869.57px;font-size:10.50px;color:#262626;transform-origin:0 0;transform:scaleX(0.900);">Cold weather</div>
<div class="t" style="left:40.30px;top:881.77px;font-size:10.50px;color:#5f6b75;transform-origin:0 0;transform:scaleX(0.890);">Now</div>
<div class="t" style="left:623.30px;top:877.02px;font-size:10.20px;color:#555;transform-origin:0 0;transform:scaleX(0.975);">Search</div>
<div class="t" style="left:949.70px;top:876.06px;font-size:11.13px;color:#fff;font-weight:bold;">up</div>
<div class="t" style="left:1546.50px;top:870.06px;font-size:9.70px;color:#1a1a1a;transform-origin:0 0;transform:scaleX(0.920);">12:44 PM</div>
<div class="t" style="left:1546.80px;top:882.46px;font-size:9.70px;color:#1a1a1a;">4/8/2025</div>
</body></html>
